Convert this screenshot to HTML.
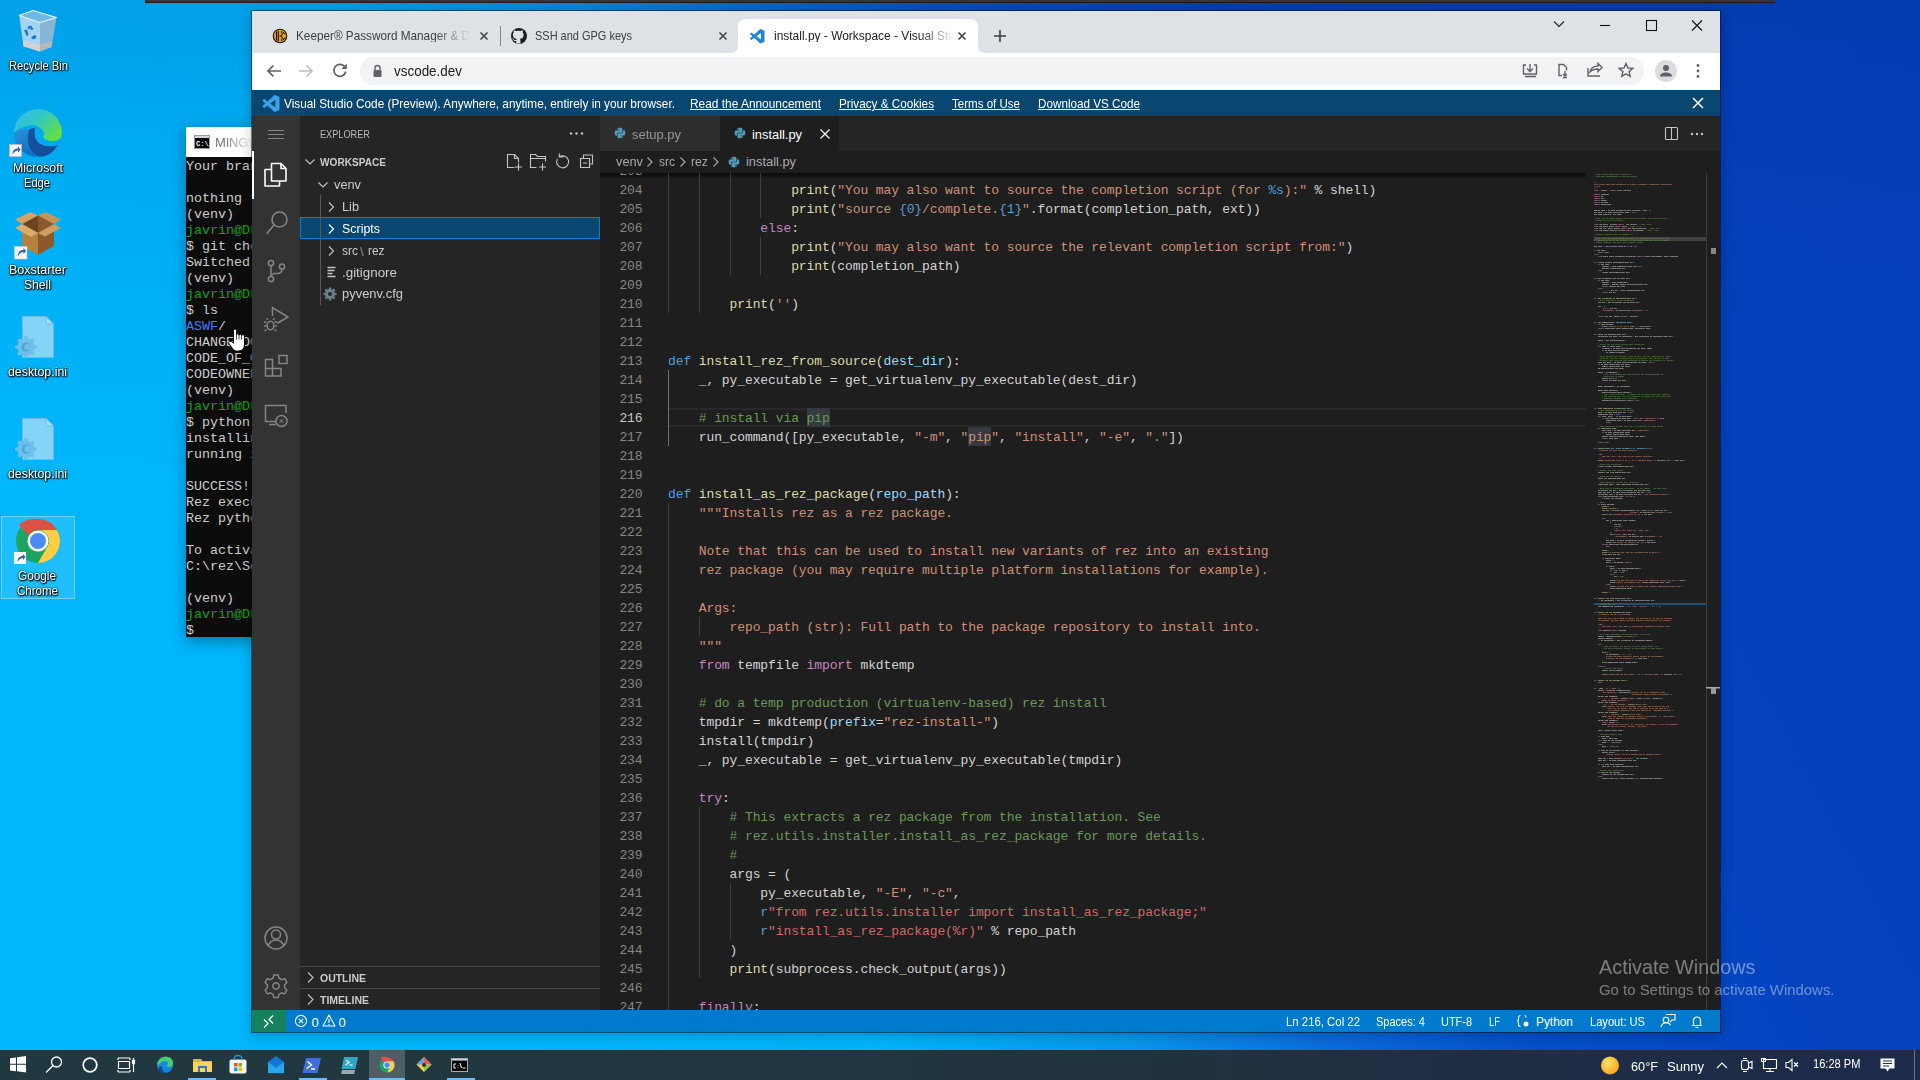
<!DOCTYPE html>
<html><head><meta charset="utf-8">
<style>
*{margin:0;padding:0;box-sizing:border-box}
html,body{width:1920px;height:1080px;overflow:hidden;position:relative;font-family:"Liberation Sans",sans-serif}
.a{position:absolute}
.t{position:absolute;white-space:pre}
svg{position:absolute;overflow:visible}
</style></head><body>
<div class="a" style="left:0;top:0;width:1920px;height:1080px;background:linear-gradient(180deg,rgba(0,30,110,.14) 0%,rgba(0,30,110,.05) 20%,rgba(0,0,0,0) 45%),linear-gradient(62deg,#00b7fd 0%,#00b5fb 36%,#0897ec 46%,#0a6cdc 54%,#0551cb 62%,#0442be 74%,#0340bb 100%)"></div>
<div class="a" style="left:145px;top:0;width:1630px;height:3px;background:#363636;border-bottom:1px solid #221a18"></div>
<!-- recycle bin -->
<svg style="left:0;top:0" width="80" height="60" viewBox="0 0 80 60">
  <path d="M19.2 15.5 L40 22.5 L40 51.5 L23.5 46 Z" fill="#a6d3ee"/>
  <path d="M40 22.5 L56.5 17.5 L51.5 47 L40 51.5 Z" fill="#86b6d4"/>
  <path d="M22.8 40.5 L40 44.5 L40 51.5 L23.5 46.5 Z" fill="#cfd3d6"/>
  <path d="M40 44.5 L52.5 41 L51.5 47 L40 51.5 Z" fill="#b3b8bc"/>
  <path d="M19.2 15.5 L33 10.5 L56.5 17.5 L40 22.5 Z" fill="#6cb9e2" stroke="#e8f6fd" stroke-width="1.1" stroke-linejoin="round"/>
  <g fill="#1877d6">
    <path d="M27.5 26.5 l3.5-1 2.5 3.5-1.8 1.2-1.6-2-1.6 1.5z"/>
    <path d="M24 30 l3 -.5 1.5 5.5 -1.8 1 z"/>
    <path d="M31 37.5 l3.5-2.5 2 1 -1 2.8 -3 .5z"/>
  </g>
</svg>
<!-- edge -->
<svg style="left:0;top:100px" width="80" height="65" viewBox="0 0 80 65">
  <defs>
    <linearGradient id="eg1" x1="0" y1="0" x2="1" y2=".6"><stop offset="0" stop-color="#3bb8ee"/><stop offset=".5" stop-color="#2fc7c8"/><stop offset="1" stop-color="#62dd4c"/></linearGradient>
    <linearGradient id="eg2" x1="0" y1="0" x2=".3" y2="1"><stop offset="0" stop-color="#2a93dc"/><stop offset="1" stop-color="#0f6cc4"/></linearGradient>
  </defs>
  <path d="M14 33 A24 24 0 0 0 38 57 Q24 48 29 30 Q21 27 14 33Z" fill="url(#eg2)"/>
  <path d="M14 33 A24 24 0 0 1 62 33 Q62 41 53 41 Q45 41 43 37 Q45 33 43 31 Q37 23 27 26 Q18 28 14 33 Z" fill="url(#eg1)"/>
  <path d="M29 30 Q24 48 38 56.5 Q50 58 58 45 Q48 48 40 44 Q33 39 35 28 Q31 28 29 30Z" fill="#154f9c"/>
  <rect x="9.5" y="44.5" width="12" height="12" fill="#f4f4f4" stroke="#c8b8a8" stroke-width=".6"/>
  <path d="M12.5 54.5c0-4 2-6 5.5-6v-2l2.5 3-2.5 3v-2c-2 0-4 1.5-5.5 4z" fill="#2a62b8"/>
</svg>
<!-- boxstarter -->
<svg style="left:0;top:200px" width="80" height="65" viewBox="0 0 80 65">
  <path d="M22 24 L38 15 L54 24 L38 33 Z" fill="#6e4420"/>
  <path d="M38 15 L54 24 L38 33 Z" fill="#8a5a2c"/>
  <path d="M22 24 L38 33 L38 55 L22 46 Z" fill="#b5813f"/>
  <path d="M38 33 L54 24 L54 46 L38 55 Z" fill="#8c5a2a"/>
  <path d="M15 19.5 L30 12 L38 15.5 L22 24 Z" fill="#d3a262"/>
  <path d="M38 15.5 L46 12 L61 19.5 L54 24 Z" fill="#c89558"/>
  <path d="M15 28 L22 24 L38 33 L31 37 Z" fill="#dbab6c"/>
  <path d="M38 33 L54 24 L61 28 L45 36.5 Z" fill="#cf9d60"/>
  <rect x="14.5" y="46.5" width="12.5" height="12.5" fill="#f4f4f4" stroke="#c8d0d8" stroke-width=".6"/>
  <path d="M18 56c0-4 2-6 5.5-6v-2l2.5 3-2.5 3v-2c-2 0-4 1.5-5.5 4z" fill="#2a62b8"/>
</svg>
<!-- desktop.ini 1 -->
<svg style="left:0;top:300px" width="80" height="70" viewBox="0 0 80 70">
  <path d="M22.5 16.5 H46 L53.5 24 V57.5 H22.5 Z" fill="#85d3f7" stroke="#6bbde6" stroke-width="1"/>
  <path d="M46 16.5 V24 H53.5 Z" fill="#a6e0fa" stroke="#6bbde6" stroke-width="1"/>
  <path d="M34.30 45.15 L36.89 45.47 L36.89 48.53 L34.30 48.85 L33.18 51.55 L34.79 53.62 L32.62 55.79 L30.55 54.18 L27.85 55.30 L27.53 57.89 L24.47 57.89 L24.15 55.30 L21.45 54.18 L19.38 55.79 L17.21 53.62 L18.82 51.55 L17.70 48.85 L15.11 48.53 L15.11 45.47 L17.70 45.15 L18.82 42.45 L17.21 40.38 L19.38 38.21 L21.45 39.82 L24.15 38.70 L24.47 36.11 L27.53 36.11 L27.85 38.70 L30.55 39.82 L32.62 38.21 L34.79 40.38 L33.18 42.45Z" fill="#6ec0ea"/>
  <circle cx="26" cy="47" r="4.5" fill="#4ea5d6"/>
  <circle cx="27.5" cy="47" r="3.2" fill="#6ec0ea"/>
</svg>
<svg style="left:0;top:402px" width="80" height="70" viewBox="0 0 80 70">
  <path d="M22.5 16.5 H46 L53.5 24 V57.5 H22.5 Z" fill="#85d3f7" stroke="#6bbde6" stroke-width="1"/>
  <path d="M46 16.5 V24 H53.5 Z" fill="#a6e0fa" stroke="#6bbde6" stroke-width="1"/>
  <path d="M34.30 45.15 L36.89 45.47 L36.89 48.53 L34.30 48.85 L33.18 51.55 L34.79 53.62 L32.62 55.79 L30.55 54.18 L27.85 55.30 L27.53 57.89 L24.47 57.89 L24.15 55.30 L21.45 54.18 L19.38 55.79 L17.21 53.62 L18.82 51.55 L17.70 48.85 L15.11 48.53 L15.11 45.47 L17.70 45.15 L18.82 42.45 L17.21 40.38 L19.38 38.21 L21.45 39.82 L24.15 38.70 L24.47 36.11 L27.53 36.11 L27.85 38.70 L30.55 39.82 L32.62 38.21 L34.79 40.38 L33.18 42.45Z" fill="#6ec0ea"/>
  <circle cx="26" cy="47" r="4.5" fill="#4ea5d6"/>
  <circle cx="27.5" cy="47" r="3.2" fill="#6ec0ea"/>
</svg>
<!-- chrome selected -->
<div class="a" style="left:1px;top:516px;width:74px;height:83px;background:rgba(255,255,255,.12);border:1px solid rgba(255,255,255,.35)"></div>
<svg style="left:0;top:515px" width="80" height="60" viewBox="0 0 80 60">
  <circle cx="38" cy="26" r="22" fill="#1da462"/>
  <path d="M38 4 A22 22 0 0 1 57 15 L38 15 A11 11 0 0 0 28.5 20.5 L19 10 A22 22 0 0 1 38 4Z" fill="#dd5144"/>
  <path d="M57 15 A22 22 0 0 1 38 48 L47.5 31.5 A11 11 0 0 0 38 15 Z" fill="#ffcd46"/>
  <circle cx="38" cy="26" r="10.5" fill="#fff"/>
  <circle cx="38" cy="26" r="8" fill="#4c8bf5"/>
  <rect x="14" y="37" width="12" height="12" fill="#fff"/>
  <path d="M17.5 47c0-4 2-6 5.5-6v-2l2.5 3-2.5 3v-2c-2 0-4 1.5-5.5 4z" fill="#2a62b8"/>
</svg>

<div class="a" style="left:178px;top:119px;width:90px;height:526px;background:rgba(0,0,0,.0);box-shadow:0 4px 14px rgba(0,0,0,.35);left:186px;top:127px;width:80px;height:510px"></div>
<div class="a" style="left:186px;top:127px;width:66px;height:510px;background:#0c0c0c;overflow:hidden">
<div class="a" style="left:0;top:0;width:66px;height:30px;background:#fff"></div>
<svg style="left:8px;top:8px" width="16" height="14" viewBox="0 0 16 14"><rect x="0.5" y="0.5" width="15" height="13" fill="#000" stroke="#9a9a9a"/><rect x="1" y="1" width="14" height="2" fill="#cfd6e0"/><text x="2" y="11" font-family="Liberation Mono" font-size="7" fill="#fff" font-weight="bold">C:\_</text></svg>
<div class="t" style="left:29px;top:8px;font-size:13px;line-height:15px;color:#777;letter-spacing:-0.2px;-webkit-mask-image:linear-gradient(90deg,#000 10px,transparent 40px)">MINGW64:/c/rez</div>
<div class="t" style="left:0;top:31.5px;font-family:'Liberation Mono',monospace;font-size:13.33px;line-height:16px;color:#cccccc">Your branch is up to date with &#x27;origin/master&#x27;.</div>
<div class="t" style="left:0;top:47.5px;font-family:'Liberation Mono',monospace;font-size:13.33px;line-height:16px;color:#ccc"></div>
<div class="t" style="left:0;top:63.5px;font-family:'Liberation Mono',monospace;font-size:13.33px;line-height:16px;color:#cccccc">nothing to commit, working tree clean</div>
<div class="t" style="left:0;top:79.5px;font-family:'Liberation Mono',monospace;font-size:13.33px;line-height:16px;color:#cccccc">(venv)</div>
<div class="t" style="left:0;top:95.5px;font-family:'Liberation Mono',monospace;font-size:13.33px;line-height:16px;color:#13a10e">javrin@DESKTOP MINGW64 /c/rez (master)</div>
<div class="t" style="left:0;top:111.5px;font-family:'Liberation Mono',monospace;font-size:13.33px;line-height:16px;color:#cccccc">$ git checkout dev</div>
<div class="t" style="left:0;top:127.5px;font-family:'Liberation Mono',monospace;font-size:13.33px;line-height:16px;color:#cccccc">Switched to branch &#x27;dev&#x27;</div>
<div class="t" style="left:0;top:143.5px;font-family:'Liberation Mono',monospace;font-size:13.33px;line-height:16px;color:#cccccc">(venv)</div>
<div class="t" style="left:0;top:159.5px;font-family:'Liberation Mono',monospace;font-size:13.33px;line-height:16px;color:#13a10e">javrin@DESKTOP MINGW64 /c/rez (dev)</div>
<div class="t" style="left:0;top:175.5px;font-family:'Liberation Mono',monospace;font-size:13.33px;line-height:16px;color:#cccccc">$ ls</div>
<div class="t" style="left:0;top:191.5px;font-family:'Liberation Mono',monospace;font-size:13.33px;line-height:16px;color:#cccccc"><span style="color:#3b78ff">ASWF</span>/</div>
<div class="t" style="left:0;top:207.5px;font-family:'Liberation Mono',monospace;font-size:13.33px;line-height:16px;color:#cccccc">CHANGELOG.md</div>
<div class="t" style="left:0;top:223.5px;font-family:'Liberation Mono',monospace;font-size:13.33px;line-height:16px;color:#cccccc">CODE_OF_CONDUCT.md</div>
<div class="t" style="left:0;top:239.5px;font-family:'Liberation Mono',monospace;font-size:13.33px;line-height:16px;color:#cccccc">CODEOWNERS</div>
<div class="t" style="left:0;top:255.5px;font-family:'Liberation Mono',monospace;font-size:13.33px;line-height:16px;color:#cccccc">(venv)</div>
<div class="t" style="left:0;top:271.5px;font-family:'Liberation Mono',monospace;font-size:13.33px;line-height:16px;color:#13a10e">javrin@DESKTOP MINGW64 /c/rez (dev)</div>
<div class="t" style="left:0;top:287.5px;font-family:'Liberation Mono',monospace;font-size:13.33px;line-height:16px;color:#cccccc">$ python install.py</div>
<div class="t" style="left:0;top:303.5px;font-family:'Liberation Mono',monospace;font-size:13.33px;line-height:16px;color:#cccccc">installing rez</div>
<div class="t" style="left:0;top:319.5px;font-family:'Liberation Mono',monospace;font-size:13.33px;line-height:16px;color:#cccccc">running install</div>
<div class="t" style="left:0;top:335.5px;font-family:'Liberation Mono',monospace;font-size:13.33px;line-height:16px;color:#ccc"></div>
<div class="t" style="left:0;top:351.5px;font-family:'Liberation Mono',monospace;font-size:13.33px;line-height:16px;color:#cccccc">SUCCESS!</div>
<div class="t" style="left:0;top:367.5px;font-family:'Liberation Mono',monospace;font-size:13.33px;line-height:16px;color:#cccccc">Rez executables installed to:</div>
<div class="t" style="left:0;top:383.5px;font-family:'Liberation Mono',monospace;font-size:13.33px;line-height:16px;color:#cccccc">Rez python API visible via:</div>
<div class="t" style="left:0;top:399.5px;font-family:'Liberation Mono',monospace;font-size:13.33px;line-height:16px;color:#ccc"></div>
<div class="t" style="left:0;top:415.5px;font-family:'Liberation Mono',monospace;font-size:13.33px;line-height:16px;color:#cccccc">To activate Rez, add the following path to PATH:</div>
<div class="t" style="left:0;top:431.5px;font-family:'Liberation Mono',monospace;font-size:13.33px;line-height:16px;color:#cccccc">C:\rez\Scripts\rez</div>
<div class="t" style="left:0;top:447.5px;font-family:'Liberation Mono',monospace;font-size:13.33px;line-height:16px;color:#ccc"></div>
<div class="t" style="left:0;top:463.5px;font-family:'Liberation Mono',monospace;font-size:13.33px;line-height:16px;color:#cccccc">(venv)</div>
<div class="t" style="left:0;top:479.5px;font-family:'Liberation Mono',monospace;font-size:13.33px;line-height:16px;color:#13a10e">javrin@DESKTOP MINGW64 /c/rez (dev)</div>
<div class="t" style="left:0;top:495.5px;font-family:'Liberation Mono',monospace;font-size:13.33px;line-height:16px;color:#cccccc">$</div>
</div>
<svg style="left:220px;top:320px" width="30" height="36" viewBox="0 0 30 36">
<path d="M13.5 21 V10.5 A1.5 1.5 0 0 1 16.5 10.5 V15 A1.25 1.25 0 0 1 19 15 V15.5 A1.25 1.25 0 0 1 21.5 15.5 V16 A1.5 1.5 0 0 1 24.5 16 V24 Q24.5 31 18.5 31 H16.5 Q14 31 12.5 28.5 L9 23.5 Q8 22 9.5 21.3 Q11 20.8 12.5 22.3 L13.5 23.3 Z" fill="#fff" stroke="#000" stroke-width="0.9"/>
<path d="M16.5 15v4.5 M19 15.5v4 M21.5 16v3.5" stroke="#000" stroke-width=".7"/>
</svg>
<!-- browser window frame -->
<div class="a" style="left:251px;top:10px;width:1470px;height:1023px;background:#dee1e6;border:1px solid rgba(0,10,20,.5);background-clip:padding-box;box-shadow:0 3px 12px rgba(0,0,0,.22)"></div>
<!-- tab strip content -->
<svg class="a" style="left:252px;top:11px" width="1468" height="42" viewBox="0 0 1468 42">
  <!-- keeper icon -->
  <circle cx="28" cy="25" r="7.3" fill="#111"/>
  <circle cx="28" cy="25" r="6.2" fill="#e5a50a"/>
  <path d="M24.5 20.5v9 M26.3 19.8v10.4" stroke="#111" stroke-width="1.1"/>
  <path d="M27.5 25h1.5 M29 25l3-4 M29 25l3 4 M29.5 20l.5 2.5 M31.8 22.5l1.8 .5 M31.8 27.5l1.8-.5 M29.5 30l.5-2.5" stroke="#111" stroke-width="1"/>
  <!-- close x tab1 -->
  <path d="M228.5 21.5l7 7 M235.5 21.5l-7 7" stroke="#3c4043" stroke-width="1.5"/>
  <!-- separator -->
  <rect x="248" y="15" width="1" height="20" fill="#80868b"/>
  <!-- github icon -->
  <circle cx="267" cy="25" r="8" fill="#1b1f23"/>
  <path d="M264.2 32.6v-2.6c-2.3.5-2.8-1-2.8-1-.4-.9-.9-1.2-.9-1.2-.8-.5 0-.5 0-.5.8.1 1.3.9 1.3.9.7 1.3 2 .9 2.4.7.1-.5.3-.9.5-1.1-1.9-.2-3.8-.9-3.8-4.1 0-.9.3-1.7.9-2.3-.1-.2-.4-1.1.1-2.2 0 0 .7-.2 2.3.9a7.8 7.8 0 0 1 4.1 0c1.6-1.1 2.3-.9 2.3-.9.5 1.1.2 2 .1 2.2.5.6.9 1.3.9 2.3 0 3.2-1.9 3.9-3.8 4.1.3.3.6.8.6 1.5v3.3" fill="#dee1e6"/>
  <path d="M467.5 21.5l7 7 M474.5 21.5l-7 7" stroke="#3c4043" stroke-width="1.5"/>
  <!-- active tab -->
  <path d="M478 42 q8 0 8 -8 v-18 q0 -8 8 -8 h224 q8 0 8 8 v18 q0 8 8 8 z" fill="#fff"/>
  <!-- vscode logo -->
  <g transform="translate(498,18) scale(0.145)">
    <path d="M96.46 10.8 75.86.87a6.23 6.23 0 0 0-7.1 1.2L29.35 38.04 12.19 25.01a4.16 4.16 0 0 0-5.32.24L1.37 30.25a4.16 4.16 0 0 0 0 6.16L16.26 50 1.37 63.59a4.16 4.16 0 0 0 0 6.16l5.5 5a4.16 4.16 0 0 0 5.32.24l17.16-13.03 39.41 35.96a6.23 6.23 0 0 0 7.1 1.2l20.6-9.92A6.25 6.25 0 0 0 100 83.58V16.42a6.25 6.25 0 0 0-3.54-5.62ZM75.02 72.7 45.11 50l29.91-22.7Z" fill="#1f86d6"/>
  </g>
  <path d="M706.5 21.5l7 7 M713.5 21.5l-7 7" stroke="#3c4043" stroke-width="1.5"/>
  <!-- plus -->
  <path d="M748 19v12 M742 25h12" stroke="#3c4043" stroke-width="1.6"/>
  <!-- caption buttons -->
  <path d="M1302 10.5l5 5 5-5" stroke="#222" stroke-width="1.1" fill="none"/>
  <path d="M1348 14.5h10" stroke="#111" stroke-width="1.1"/>
  <rect x="1394.5" y="9.5" width="10" height="10" stroke="#111" stroke-width="1.1" fill="none"/>
  <path d="M1440 9.5l10 10 M1450 9.5l-10 10" stroke="#111" stroke-width="1.1"/>
</svg>
<!-- toolbar -->
<div class="a" style="left:252px;top:53px;width:1468px;height:37px;background:#fff"></div>
<div class="a" style="left:360px;top:57px;width:1284px;height:28px;border-radius:14px;background:#f1f3f4"></div>
<svg class="a" style="left:252px;top:53px" width="1468" height="37" viewBox="0 0 1468 37">
  <path d="M29 18h-13 M21.5 12.5 16 18l5.5 5.5" stroke="#5f6368" stroke-width="1.7" fill="none"/>
  <path d="M47 18h13 M54.5 12.5 60 18l-5.5 5.5" stroke="#bdc1c6" stroke-width="1.7" fill="none"/>
  <path d="M92.5 13.5a6 6 0 1 0 1.3 5" stroke="#5f6368" stroke-width="1.7" fill="none"/>
  <path d="M94.8 10.5v5.5h-5.5z" fill="#5f6368"/>
  <!-- lock -->
  <rect x="121.5" y="17" width="8" height="7" rx="1" fill="#5f6368"/>
  <path d="M123 17v-2a2.5 2.5 0 0 1 5 0v2" stroke="#5f6368" stroke-width="1.4" fill="none"/>
  <!-- right icons -->
  <g stroke="#5f6368" stroke-width="1.4" fill="none">
    <path d="M1274 12h-2.5v9h13v-9h-2.5 M1278 11v7 M1275 15.5l3 3 3-3"/>
    <path d="M1273 23.5h11" stroke-width="1.6"/>
    <path d="M1307 20v-8.5h4.5l3 3v3"/>
    <path d="M1307 20v2.5h3 M1313 18v5 M1311 21l2 2 2-2 M1311 24.5h4"/>
    <path d="M1336 15v8h12 M1338 19c1-4 4-6 8-6v-2.5l4 4-4 4v-2.5c-3 0-6 1-8 3z"/>
    <path d="M1374 10.5l2 4.5 4.8.4-3.7 3.2 1.1 4.7-4.2-2.5-4.2 2.5 1.1-4.7-3.7-3.2 4.8-.4z"/>
  </g>
  <circle cx="1414" cy="18" r="11" fill="#dadce0"/>
  <circle cx="1414" cy="15" r="3" fill="#5f6368"/>
  <path d="M1408 23.5c0-3 3-4 6-4s6 1 6 4z" fill="#5f6368"/>
  <circle cx="1446" cy="12.5" r="1.4" fill="#5f6368"/>
  <circle cx="1446" cy="18" r="1.4" fill="#5f6368"/>
  <circle cx="1446" cy="23.5" r="1.4" fill="#5f6368"/>
</svg>
<!-- banner -->
<div class="a" style="left:252px;top:90px;width:1468px;height:26px;background:#094771"></div>
<svg class="a" style="left:262px;top:95px" width="18" height="17" viewBox="0 0 100 100">
  <path d="M96.46 10.8 75.86.87a6.23 6.23 0 0 0-7.1 1.2L29.35 38.04 12.19 25.01a4.16 4.16 0 0 0-5.32.24L1.37 30.25a4.16 4.16 0 0 0 0 6.16L16.26 50 1.37 63.59a4.16 4.16 0 0 0 0 6.16l5.5 5a4.16 4.16 0 0 0 5.32.24l17.16-13.03 39.41 35.96a6.23 6.23 0 0 0 7.1 1.2l20.6-9.92A6.25 6.25 0 0 0 100 83.58V16.42a6.25 6.25 0 0 0-3.54-5.62ZM75.02 72.7 45.11 50l29.91-22.7Z" fill="#3aa0e8"/>
</svg>
<svg class="a" style="left:1691px;top:96px" width="14" height="14"><path d="M2 2l10 10 M12 2 2 12" stroke="#fff" stroke-width="1.5"/></svg>

<!-- activity bar -->
<div class="a" style="left:252px;top:116px;width:48px;height:894px;background:#333333"></div>
<div class="a" style="left:252px;top:151px;width:2px;height:48px;background:#fff"></div>
<svg style="left:252px;top:116px" width="48" height="894" viewBox="0 0 48 894">
  <g stroke="#858585" stroke-width="1" fill="none">
    <path d="M16 14.5h16 M16 18.5h16 M16 22.5h16"/>
  </g>
  <!-- explorer (active) -->
  <g stroke="#ffffff" stroke-width="1.6" fill="none" stroke-linejoin="round">
    <path d="M19.5 53.5h-6.5v16.5h14.5v-6"/>
    <path d="M19.5 47.5h9.5l5 5v12.5h-14.5z" fill="#333"/>
    <path d="M29 47.5v5h5"/>
  </g>
  <!-- search -->
  <g stroke="#858585" stroke-width="1.6" fill="none">
    <circle cx="27.5" cy="103.5" r="7.5"/>
    <path d="M22.2 108.8 14.5 118"/>
  </g>
  <!-- source control -->
  <g stroke="#858585" stroke-width="1.5" fill="none">
    <circle cx="19" cy="147" r="2.6"/>
    <circle cx="30" cy="150.5" r="2.6"/>
    <circle cx="19" cy="163" r="2.6"/>
    <path d="M19 149.6v10.8 M30 153.1c0 3-2 4.5-5 4.5h-2c-2 0-4 1.5-4 2.8"/>
  </g>
  <!-- run & debug -->
  <g stroke="#858585" stroke-width="1.5" fill="none">
    <path d="M20.5 200v-8.5l15.5 9.5-11 6.5"/>
    <ellipse cx="18.5" cy="209.5" rx="3.4" ry="4.2" fill="#333"/>
    <path d="M14.5 206h-2.5 M14.5 210h-2.5 M14.5 213.5l-2 1.5 M22.5 206h2.5 M22.5 210h2.5 M22.5 213.5l2 1.5 M16 203.8l-1.5-1.5 M21 203.8l1.5-1.5"/>
  </g>
  <!-- extensions -->
  <g stroke="#858585" stroke-width="1.5" fill="none">
    <path d="M13.5 243.5h7v16.5h-7z M20.5 252.5h8.5v7.5h-8.5 M13.5 252.5h7"/>
    <rect x="27" y="239.5" width="8" height="8"/>
  </g>
  <!-- remote explorer -->
  <g stroke="#858585" stroke-width="1.5" fill="none">
    <path d="M26 305.5H13.5v-16h20.5v7.5 M17 308.5h7"/>
    <circle cx="29.5" cy="305" r="5.5" fill="#333"/>
    <path d="M27.5 303l2 2-2 2 M31.5 303l-2 2 2 2" stroke-width="1"/>
  </g>
  <!-- account -->
  <g stroke="#858585" stroke-width="1.5" fill="none">
    <circle cx="24" cy="822" r="11"/>
    <circle cx="24" cy="818.5" r="4.5"/>
    <path d="M16 830c2-4.5 5-6 8-6s6 1.5 8 6"/>
  </g>
  <!-- gear -->
  <g transform="translate(24,870)" stroke="#858585" stroke-width="1.5" fill="none">
    <path d="M-2.2-11h4.4l.8 3.2 2.6 1.5 3.1-1 2.2 3.8-2.3 2.3v3l2.3 2.3-2.2 3.8-3.1-1-2.6 1.5-.8 3.2h-4.4l-.8-3.2-2.6-1.5-3.1 1-2.2-3.8 2.3-2.3v-3l-2.3-2.3 2.2-3.8 3.1 1 2.6-1.5z"/>
    <circle cx="0" cy="0" r="3.2"/>
  </g>
</svg>
<!-- sidebar -->
<div class="a" style="left:300px;top:116px;width:300px;height:894px;background:#252526"></div>
<div class="a" style="left:300px;top:217px;width:300px;height:22px;background:#094771;border:1px solid #007fd4"></div>
<div class="a" style="left:320px;top:195px;width:1px;height:110px;background:#585858"></div>
<div class="a" style="left:300px;top:966px;width:300px;height:1px;background:#444444"></div>
<div class="a" style="left:300px;top:988px;width:300px;height:1px;background:#444444"></div>
<svg style="left:300px;top:116px" width="300" height="894" viewBox="0 0 300 894">
  <g fill="#c5c5c5"><circle cx="271" cy="17.5" r="1.2"/><circle cx="276.5" cy="17.5" r="1.2"/><circle cx="282" cy="17.5" r="1.2"/></g>
  <g stroke="#c5c5c5" stroke-width="1.1" fill="none">
    <path d="M5.5 43.5l4.5 4.5 4.5-4.5"/>
    <path d="M18.5 66.5l4.5 4.5 4.5-4.5"/>
    <path d="M29 86.5l4.5 4.5-4.5 4.5"/>
    <path d="M29 108.5l4.5 4.5-4.5 4.5" stroke="#fff"/>
    <path d="M29 130.5l4.5 4.5-4.5 4.5"/>
    <!-- gitignore lines icon -->
    <path d="M27.5 151.5h8 M27.5 154.5h7 M27.5 157.5h5 M27.5 160.5h8" stroke-width="1.3"/>
    <path d="M8 856.5l5 5-5 5" />
    <path d="M8 878.5l5 5-5 5" />
  </g>
  <!-- header action icons -->
  <g stroke="#c5c5c5" stroke-width="1.1" fill="none">
    <path d="M214.5 51.5h-7v-13h7l4 4v4 M214.5 38.5v4h4 M218.5 47.5v7 M215 51h7"/>
    <path d="M236.5 51.5h-6v-13h5l2 2h8v5 M230.5 42.5h15 M242.5 47.5v7 M239 51h7"/>
    <path d="M259.3 40.9A6 6 0 1 1 257.4 43 M259.3 37.5v3.5h3.5"/>
    <path d="M283.5 42v-3h9v9h-3 M280.5 42.5h9v9h-9z M283 47h4"/>
  </g>
  <!-- pyvenv gear -->
  <g transform="translate(30,178)" fill="#6d8086">
    <circle r="5"/>
    <g stroke="#6d8086" stroke-width="2.2"><path d="M0-6.5v13 M-6.5 0h13 M-4.6-4.6l9.2 9.2 M4.6-4.6l-9.2 9.2"/></g>
    <circle r="2" fill="#252526"/>
  </g>
</svg>
<!-- editor -->
<div class="a" style="left:600px;top:116px;width:1120px;height:35px;background:#252526"></div>
<div class="a" style="left:600px;top:116px;width:120px;height:35px;background:#2d2d2d"></div>
<div class="a" style="left:720px;top:116px;width:119px;height:35px;background:#1e1e1e"></div>
<div class="a" style="left:600px;top:151px;width:1120px;height:859px;background:#1e1e1e"></div>
<div class="a" style="left:600px;top:173px;width:986px;height:6px;background:linear-gradient(#0a0a0a,rgba(0,0,0,0))"></div>
<div class="a" style="left:1706px;top:173px;width:1px;height:837px;background:#3a3a3a"></div>
<svg style="left:600px;top:116px" width="1120" height="894" viewBox="0 0 1120 894">
  <!-- close x active tab -->
  <path d="M220.5 13.5l9 9 M229.5 13.5l-9 9" stroke="#fff" stroke-width="1.2"/>
  <!-- split editor -->
  <rect x="1065.5" y="11.5" width="12" height="12" rx="1" stroke="#c5c5c5" stroke-width="1.1" fill="none"/>
  <path d="M1071.5 11.5v12" stroke="#c5c5c5" stroke-width="1.1"/>
  <g fill="#c5c5c5"><circle cx="1092" cy="18" r="1.2"/><circle cx="1097" cy="18" r="1.2"/><circle cx="1102" cy="18" r="1.2"/></g>
  <!-- breadcrumb chevrons -->
  <g stroke="#a9a9a9" stroke-width="1.2" fill="none">
    <path d="M47.5 41.5l4.5 4.5-4.5 4.5 M80.5 41.5l4.5 4.5-4.5 4.5 M113.5 41.5l4.5 4.5-4.5 4.5"/>
  </g>
  <!-- scrollbar markers -->
  <rect x="1111" y="132" width="5" height="6" fill="#888"/>
  <rect x="1106" y="571" width="14" height="1.5" fill="#aaa"/>
  <rect x="1111" y="572" width="5" height="6" fill="#999"/>
</svg>
<!-- python icons -->
<svg style="left:614px;top:127px" width="12" height="12" viewBox="0 0 16 16"><path d="M7.9 1C4.3 1 4.5 2.6 4.5 2.6v1.6h3.5v.5H3.1S.8 4.4.8 8s2 3.5 2 3.5h1.2V9.8s-.1-2 2-2h3.4s1.9 0 1.9-1.9V2.9S11.6 1 7.9 1zM6 2.1a.6.6 0 1 1 0 1.2.6.6 0 0 1 0-1.2z" fill="#519aba"/><path d="M8.1 15c3.6 0 3.4-1.6 3.4-1.6v-1.6H8v-.5h4.9s2.3.3 2.3-3.3-2-3.5-2-3.5H12v1.7s.1 2-2 2H6.6s-1.9 0-1.9 1.9v3.1S4.4 15 8.1 15zm1.9-1.1a.6.6 0 1 1 0-1.2.6.6 0 0 1 0 1.2z" fill="#519aba"/></svg>
<svg style="left:734px;top:127px" width="12" height="12" viewBox="0 0 16 16"><path d="M7.9 1C4.3 1 4.5 2.6 4.5 2.6v1.6h3.5v.5H3.1S.8 4.4.8 8s2 3.5 2 3.5h1.2V9.8s-.1-2 2-2h3.4s1.9 0 1.9-1.9V2.9S11.6 1 7.9 1zM6 2.1a.6.6 0 1 1 0 1.2.6.6 0 0 1 0-1.2z" fill="#519aba"/><path d="M8.1 15c3.6 0 3.4-1.6 3.4-1.6v-1.6H8v-.5h4.9s2.3.3 2.3-3.3-2-3.5-2-3.5H12v1.7s.1 2-2 2H6.6s-1.9 0-1.9 1.9v3.1S4.4 15 8.1 15zm1.9-1.1a.6.6 0 1 1 0-1.2.6.6 0 0 1 0 1.2z" fill="#519aba"/></svg>
<svg style="left:728px;top:156px" width="12" height="12" viewBox="0 0 16 16"><path d="M7.9 1C4.3 1 4.5 2.6 4.5 2.6v1.6h3.5v.5H3.1S.8 4.4.8 8s2 3.5 2 3.5h1.2V9.8s-.1-2 2-2h3.4s1.9 0 1.9-1.9V2.9S11.6 1 7.9 1zM6 2.1a.6.6 0 1 1 0 1.2.6.6 0 0 1 0-1.2z" fill="#519aba"/><path d="M8.1 15c3.6 0 3.4-1.6 3.4-1.6v-1.6H8v-.5h4.9s2.3.3 2.3-3.3-2-3.5-2-3.5H12v1.7s.1 2-2 2H6.6s-1.9 0-1.9 1.9v3.1S4.4 15 8.1 15zm1.9-1.1a.6.6 0 1 1 0-1.2.6.6 0 0 1 0 1.2z" fill="#519aba"/></svg>
<!-- status bar -->
<div class="a" style="left:252px;top:1010px;width:1468px;height:22px;background:#007acc"></div>
<div class="a" style="left:252px;top:1010px;width:34px;height:22px;background:#16825d"></div>
<svg style="left:252px;top:1010px" width="1468" height="22" viewBox="0 0 1468 22">
  <path d="M12 9.5l4 4-4 4 M21 5.5l-4 4 4 4" stroke="#fff" stroke-width="1.2" fill="none"/>
  <circle cx="49" cy="11" r="5.6" stroke="#fff" stroke-width="1.1" fill="none"/>
  <path d="M46.8 8.8l4.4 4.4 M51.2 8.8l-4.4 4.4" stroke="#fff" stroke-width="1.1"/>
  <path d="M77 5l6 11h-12z M77 9v4 M77 14v1" stroke="#fff" stroke-width="1.1" fill="none" stroke-linejoin="round"/>
  <!-- {} python -->
  <path d="M1268.5 5.5c-1.5 0-2 .7-2 2v2c0 1-.5 1.5-1.5 1.5 1 0 1.5.5 1.5 1.5v2c0 1.3.5 2 2 2 M1272.5 5.5c1 0 1.5.7 1.5 2" stroke="#fff" stroke-width="1.1" fill="none"/>
  <circle cx="1274" cy="14" r="2.5" fill="#fff"/>
  <!-- feedback -->
  <g stroke="#fff" stroke-width="1.1" fill="none">
    <circle cx="1414" cy="10" r="2.8"/>
    <path d="M1409 17c.8-3 2.5-4.2 5-4.2s4 1.2 4.5 2.5 M1414 4.5h9v5.5h-3l-2 2"/>
  </g>
  <!-- bell -->
  <path d="M1440 15.5h10 M1441.5 15.5v-5a3.5 3.5 0 0 1 7 0v5 M1443.5 17.5h3" stroke="#fff" stroke-width="1.2" fill="none"/>
</svg>

<div class="a" style="left:600px;top:173px;width:1106px;height:837px;overflow:hidden">
<div class="a" style="left:68px;top:235px;width:918px;height:19px;border-top:1px solid #282828;border-bottom:1px solid #282828;box-shadow:inset 0 1px 0 #282828,inset 0 -1px 0 #282828"></div>
<div class="a" style="left:206.55px;top:235px;width:23.09px;height:19px;background:#343a40"></div>
<div class="a" style="left:368.18px;top:254px;width:23.09px;height:19px;background:#343a40"></div>
<div class="a" style="left:68.00px;top:-12px;width:1px;height:152px;background:#404040"></div>
<div class="a" style="left:98.79px;top:-12px;width:1px;height:152px;background:#404040"></div>
<div class="a" style="left:129.58px;top:-12px;width:1px;height:114px;background:#404040"></div>
<div class="a" style="left:160.36px;top:-12px;width:1px;height:57px;background:#404040"></div>
<div class="a" style="left:160.36px;top:64px;width:1px;height:38px;background:#404040"></div>
<div class="a" style="left:68.00px;top:197px;width:1px;height:76px;background:#707070"></div>
<div class="a" style="left:68.00px;top:330px;width:1px;height:513px;background:#404040"></div>
<div class="a" style="left:98.79px;top:444px;width:1px;height:19px;background:#404040"></div>
<div class="a" style="left:98.79px;top:634px;width:1px;height:171px;background:#404040"></div>
<div class="a" style="left:129.58px;top:710px;width:1px;height:57px;background:#404040"></div>
<div class="t" style="left:19.41px;top:-8.16px;font-family:'Liberation Mono',monospace;font-size:13px;line-height:13px;letter-spacing:-0.104px;color:#858585">203</div>
<div class="t" style="left:19.41px;top:10.84px;font-family:'Liberation Mono',monospace;font-size:13px;line-height:13px;letter-spacing:-0.104px;color:#858585">204</div>
<div class="t" style="left:19.41px;top:29.84px;font-family:'Liberation Mono',monospace;font-size:13px;line-height:13px;letter-spacing:-0.104px;color:#858585">205</div>
<div class="t" style="left:19.41px;top:48.84px;font-family:'Liberation Mono',monospace;font-size:13px;line-height:13px;letter-spacing:-0.104px;color:#858585">206</div>
<div class="t" style="left:19.41px;top:67.84px;font-family:'Liberation Mono',monospace;font-size:13px;line-height:13px;letter-spacing:-0.104px;color:#858585">207</div>
<div class="t" style="left:19.41px;top:86.84px;font-family:'Liberation Mono',monospace;font-size:13px;line-height:13px;letter-spacing:-0.104px;color:#858585">208</div>
<div class="t" style="left:19.41px;top:105.84px;font-family:'Liberation Mono',monospace;font-size:13px;line-height:13px;letter-spacing:-0.104px;color:#858585">209</div>
<div class="t" style="left:19.41px;top:124.84px;font-family:'Liberation Mono',monospace;font-size:13px;line-height:13px;letter-spacing:-0.104px;color:#858585">210</div>
<div class="t" style="left:19.41px;top:143.84px;font-family:'Liberation Mono',monospace;font-size:13px;line-height:13px;letter-spacing:-0.104px;color:#858585">211</div>
<div class="t" style="left:19.41px;top:162.84px;font-family:'Liberation Mono',monospace;font-size:13px;line-height:13px;letter-spacing:-0.104px;color:#858585">212</div>
<div class="t" style="left:19.41px;top:181.84px;font-family:'Liberation Mono',monospace;font-size:13px;line-height:13px;letter-spacing:-0.104px;color:#858585">213</div>
<div class="t" style="left:19.41px;top:200.84px;font-family:'Liberation Mono',monospace;font-size:13px;line-height:13px;letter-spacing:-0.104px;color:#858585">214</div>
<div class="t" style="left:19.41px;top:219.84px;font-family:'Liberation Mono',monospace;font-size:13px;line-height:13px;letter-spacing:-0.104px;color:#858585">215</div>
<div class="t" style="left:19.41px;top:238.84px;font-family:'Liberation Mono',monospace;font-size:13px;line-height:13px;letter-spacing:-0.104px;color:#c6c6c6">216</div>
<div class="t" style="left:19.41px;top:257.84px;font-family:'Liberation Mono',monospace;font-size:13px;line-height:13px;letter-spacing:-0.104px;color:#858585">217</div>
<div class="t" style="left:19.41px;top:276.84px;font-family:'Liberation Mono',monospace;font-size:13px;line-height:13px;letter-spacing:-0.104px;color:#858585">218</div>
<div class="t" style="left:19.41px;top:295.84px;font-family:'Liberation Mono',monospace;font-size:13px;line-height:13px;letter-spacing:-0.104px;color:#858585">219</div>
<div class="t" style="left:19.41px;top:314.84px;font-family:'Liberation Mono',monospace;font-size:13px;line-height:13px;letter-spacing:-0.104px;color:#858585">220</div>
<div class="t" style="left:19.41px;top:333.84px;font-family:'Liberation Mono',monospace;font-size:13px;line-height:13px;letter-spacing:-0.104px;color:#858585">221</div>
<div class="t" style="left:19.41px;top:352.84px;font-family:'Liberation Mono',monospace;font-size:13px;line-height:13px;letter-spacing:-0.104px;color:#858585">222</div>
<div class="t" style="left:19.41px;top:371.84px;font-family:'Liberation Mono',monospace;font-size:13px;line-height:13px;letter-spacing:-0.104px;color:#858585">223</div>
<div class="t" style="left:19.41px;top:390.84px;font-family:'Liberation Mono',monospace;font-size:13px;line-height:13px;letter-spacing:-0.104px;color:#858585">224</div>
<div class="t" style="left:19.41px;top:409.84px;font-family:'Liberation Mono',monospace;font-size:13px;line-height:13px;letter-spacing:-0.104px;color:#858585">225</div>
<div class="t" style="left:19.41px;top:428.84px;font-family:'Liberation Mono',monospace;font-size:13px;line-height:13px;letter-spacing:-0.104px;color:#858585">226</div>
<div class="t" style="left:19.41px;top:447.84px;font-family:'Liberation Mono',monospace;font-size:13px;line-height:13px;letter-spacing:-0.104px;color:#858585">227</div>
<div class="t" style="left:19.41px;top:466.84px;font-family:'Liberation Mono',monospace;font-size:13px;line-height:13px;letter-spacing:-0.104px;color:#858585">228</div>
<div class="t" style="left:19.41px;top:485.84px;font-family:'Liberation Mono',monospace;font-size:13px;line-height:13px;letter-spacing:-0.104px;color:#858585">229</div>
<div class="t" style="left:19.41px;top:504.84px;font-family:'Liberation Mono',monospace;font-size:13px;line-height:13px;letter-spacing:-0.104px;color:#858585">230</div>
<div class="t" style="left:19.41px;top:523.84px;font-family:'Liberation Mono',monospace;font-size:13px;line-height:13px;letter-spacing:-0.104px;color:#858585">231</div>
<div class="t" style="left:19.41px;top:542.84px;font-family:'Liberation Mono',monospace;font-size:13px;line-height:13px;letter-spacing:-0.104px;color:#858585">232</div>
<div class="t" style="left:19.41px;top:561.84px;font-family:'Liberation Mono',monospace;font-size:13px;line-height:13px;letter-spacing:-0.104px;color:#858585">233</div>
<div class="t" style="left:19.41px;top:580.84px;font-family:'Liberation Mono',monospace;font-size:13px;line-height:13px;letter-spacing:-0.104px;color:#858585">234</div>
<div class="t" style="left:19.41px;top:599.84px;font-family:'Liberation Mono',monospace;font-size:13px;line-height:13px;letter-spacing:-0.104px;color:#858585">235</div>
<div class="t" style="left:19.41px;top:618.84px;font-family:'Liberation Mono',monospace;font-size:13px;line-height:13px;letter-spacing:-0.104px;color:#858585">236</div>
<div class="t" style="left:19.41px;top:637.84px;font-family:'Liberation Mono',monospace;font-size:13px;line-height:13px;letter-spacing:-0.104px;color:#858585">237</div>
<div class="t" style="left:19.41px;top:656.84px;font-family:'Liberation Mono',monospace;font-size:13px;line-height:13px;letter-spacing:-0.104px;color:#858585">238</div>
<div class="t" style="left:19.41px;top:675.84px;font-family:'Liberation Mono',monospace;font-size:13px;line-height:13px;letter-spacing:-0.104px;color:#858585">239</div>
<div class="t" style="left:19.41px;top:694.84px;font-family:'Liberation Mono',monospace;font-size:13px;line-height:13px;letter-spacing:-0.104px;color:#858585">240</div>
<div class="t" style="left:19.41px;top:713.84px;font-family:'Liberation Mono',monospace;font-size:13px;line-height:13px;letter-spacing:-0.104px;color:#858585">241</div>
<div class="t" style="left:19.41px;top:732.84px;font-family:'Liberation Mono',monospace;font-size:13px;line-height:13px;letter-spacing:-0.104px;color:#858585">242</div>
<div class="t" style="left:19.41px;top:751.84px;font-family:'Liberation Mono',monospace;font-size:13px;line-height:13px;letter-spacing:-0.104px;color:#858585">243</div>
<div class="t" style="left:19.41px;top:770.84px;font-family:'Liberation Mono',monospace;font-size:13px;line-height:13px;letter-spacing:-0.104px;color:#858585">244</div>
<div class="t" style="left:19.41px;top:789.84px;font-family:'Liberation Mono',monospace;font-size:13px;line-height:13px;letter-spacing:-0.104px;color:#858585">245</div>
<div class="t" style="left:19.41px;top:808.84px;font-family:'Liberation Mono',monospace;font-size:13px;line-height:13px;letter-spacing:-0.104px;color:#858585">246</div>
<div class="t" style="left:19.41px;top:827.84px;font-family:'Liberation Mono',monospace;font-size:13px;line-height:13px;letter-spacing:-0.104px;color:#858585">247</div>
<div class="t" style="left:19.41px;top:846.84px;font-family:'Liberation Mono',monospace;font-size:13px;line-height:13px;letter-spacing:-0.104px;color:#858585">248</div>
<div class="t" style="left:191.15px;top:10.84px;font-family:'Liberation Mono',monospace;font-size:13px;line-height:13px;letter-spacing:-0.104px"><span style="color:#dcdcaa">print</span><span style="color:#d4d4d4">(</span><span style="color:#ce9178">&quot;You may also want to source the completion script (for </span><span style="color:#569cd6">%s</span><span style="color:#ce9178">):&quot;</span><span style="color:#d4d4d4"> % shell)</span></div>
<div class="t" style="left:191.15px;top:29.84px;font-family:'Liberation Mono',monospace;font-size:13px;line-height:13px;letter-spacing:-0.104px"><span style="color:#dcdcaa">print</span><span style="color:#d4d4d4">(</span><span style="color:#ce9178">&quot;source </span><span style="color:#569cd6">{0}</span><span style="color:#ce9178">/complete.</span><span style="color:#569cd6">{1}</span><span style="color:#ce9178">&quot;</span><span style="color:#d4d4d4">.format(completion_path, ext))</span></div>
<div class="t" style="left:160.36px;top:48.84px;font-family:'Liberation Mono',monospace;font-size:13px;line-height:13px;letter-spacing:-0.104px"><span style="color:#c586c0">else</span><span style="color:#d4d4d4">:</span></div>
<div class="t" style="left:191.15px;top:67.84px;font-family:'Liberation Mono',monospace;font-size:13px;line-height:13px;letter-spacing:-0.104px"><span style="color:#dcdcaa">print</span><span style="color:#d4d4d4">(</span><span style="color:#ce9178">&quot;You may also want to source the relevant completion script from:&quot;</span><span style="color:#d4d4d4">)</span></div>
<div class="t" style="left:191.15px;top:86.84px;font-family:'Liberation Mono',monospace;font-size:13px;line-height:13px;letter-spacing:-0.104px"><span style="color:#dcdcaa">print</span><span style="color:#d4d4d4">(completion_path)</span></div>
<div class="t" style="left:129.58px;top:124.84px;font-family:'Liberation Mono',monospace;font-size:13px;line-height:13px;letter-spacing:-0.104px"><span style="color:#dcdcaa">print</span><span style="color:#d4d4d4">(</span><span style="color:#ce9178">&#x27;&#x27;</span><span style="color:#d4d4d4">)</span></div>
<div class="t" style="left:68.00px;top:181.84px;font-family:'Liberation Mono',monospace;font-size:13px;line-height:13px;letter-spacing:-0.104px"><span style="color:#569cd6">def</span><span style="color:#d4d4d4"> </span><span style="color:#dcdcaa">install_rez_from_source</span><span style="color:#d4d4d4">(</span><span style="color:#9cdcfe">dest_dir</span><span style="color:#d4d4d4">):</span></div>
<div class="t" style="left:98.79px;top:200.84px;font-family:'Liberation Mono',monospace;font-size:13px;line-height:13px;letter-spacing:-0.104px"><span style="color:#d4d4d4">_, py_executable = get_virtualenv_py_executable(dest_dir)</span></div>
<div class="t" style="left:98.79px;top:238.84px;font-family:'Liberation Mono',monospace;font-size:13px;line-height:13px;letter-spacing:-0.104px"><span style="color:#6a9955"># install via pip</span></div>
<div class="t" style="left:98.79px;top:257.84px;font-family:'Liberation Mono',monospace;font-size:13px;line-height:13px;letter-spacing:-0.104px"><span style="color:#d4d4d4">run_command([py_executable, </span><span style="color:#ce9178">&quot;-m&quot;</span><span style="color:#d4d4d4">, </span><span style="color:#ce9178">&quot;pip&quot;</span><span style="color:#d4d4d4">, </span><span style="color:#ce9178">&quot;install&quot;</span><span style="color:#d4d4d4">, </span><span style="color:#ce9178">&quot;-e&quot;</span><span style="color:#d4d4d4">, </span><span style="color:#ce9178">&quot;.&quot;</span><span style="color:#d4d4d4">])</span></div>
<div class="t" style="left:68.00px;top:314.84px;font-family:'Liberation Mono',monospace;font-size:13px;line-height:13px;letter-spacing:-0.104px"><span style="color:#569cd6">def</span><span style="color:#d4d4d4"> </span><span style="color:#dcdcaa">install_as_rez_package</span><span style="color:#d4d4d4">(</span><span style="color:#9cdcfe">repo_path</span><span style="color:#d4d4d4">):</span></div>
<div class="t" style="left:98.79px;top:333.84px;font-family:'Liberation Mono',monospace;font-size:13px;line-height:13px;letter-spacing:-0.104px"><span style="color:#ce9178">&quot;&quot;&quot;Installs rez as a rez package.</span></div>
<div class="t" style="left:98.79px;top:371.84px;font-family:'Liberation Mono',monospace;font-size:13px;line-height:13px;letter-spacing:-0.104px"><span style="color:#ce9178">Note that this can be used to install new variants of rez into an existing</span></div>
<div class="t" style="left:98.79px;top:390.84px;font-family:'Liberation Mono',monospace;font-size:13px;line-height:13px;letter-spacing:-0.104px"><span style="color:#ce9178">rez package (you may require multiple platform installations for example).</span></div>
<div class="t" style="left:98.79px;top:428.84px;font-family:'Liberation Mono',monospace;font-size:13px;line-height:13px;letter-spacing:-0.104px"><span style="color:#ce9178">Args:</span></div>
<div class="t" style="left:129.58px;top:447.84px;font-family:'Liberation Mono',monospace;font-size:13px;line-height:13px;letter-spacing:-0.104px"><span style="color:#ce9178">repo_path (str): Full path to the package repository to install into.</span></div>
<div class="t" style="left:98.79px;top:466.84px;font-family:'Liberation Mono',monospace;font-size:13px;line-height:13px;letter-spacing:-0.104px"><span style="color:#ce9178">&quot;&quot;&quot;</span></div>
<div class="t" style="left:98.79px;top:485.84px;font-family:'Liberation Mono',monospace;font-size:13px;line-height:13px;letter-spacing:-0.104px"><span style="color:#c586c0">from</span><span style="color:#d4d4d4"> tempfile </span><span style="color:#c586c0">import</span><span style="color:#d4d4d4"> mkdtemp</span></div>
<div class="t" style="left:98.79px;top:523.84px;font-family:'Liberation Mono',monospace;font-size:13px;line-height:13px;letter-spacing:-0.104px"><span style="color:#6a9955"># do a temp production (virtualenv-based) rez install</span></div>
<div class="t" style="left:98.79px;top:542.84px;font-family:'Liberation Mono',monospace;font-size:13px;line-height:13px;letter-spacing:-0.104px"><span style="color:#d4d4d4">tmpdir = mkdtemp(</span><span style="color:#9cdcfe">prefix</span><span style="color:#d4d4d4">=</span><span style="color:#ce9178">&quot;rez-install-&quot;</span><span style="color:#d4d4d4">)</span></div>
<div class="t" style="left:98.79px;top:561.84px;font-family:'Liberation Mono',monospace;font-size:13px;line-height:13px;letter-spacing:-0.104px"><span style="color:#d4d4d4">install(tmpdir)</span></div>
<div class="t" style="left:98.79px;top:580.84px;font-family:'Liberation Mono',monospace;font-size:13px;line-height:13px;letter-spacing:-0.104px"><span style="color:#d4d4d4">_, py_executable = get_virtualenv_py_executable(tmpdir)</span></div>
<div class="t" style="left:98.79px;top:618.84px;font-family:'Liberation Mono',monospace;font-size:13px;line-height:13px;letter-spacing:-0.104px"><span style="color:#c586c0">try</span><span style="color:#d4d4d4">:</span></div>
<div class="t" style="left:129.58px;top:637.84px;font-family:'Liberation Mono',monospace;font-size:13px;line-height:13px;letter-spacing:-0.104px"><span style="color:#6a9955"># This extracts a rez package from the installation. See</span></div>
<div class="t" style="left:129.58px;top:656.84px;font-family:'Liberation Mono',monospace;font-size:13px;line-height:13px;letter-spacing:-0.104px"><span style="color:#6a9955"># rez.utils.installer.install_as_rez_package for more details.</span></div>
<div class="t" style="left:129.58px;top:675.84px;font-family:'Liberation Mono',monospace;font-size:13px;line-height:13px;letter-spacing:-0.104px"><span style="color:#6a9955">#</span></div>
<div class="t" style="left:129.58px;top:694.84px;font-family:'Liberation Mono',monospace;font-size:13px;line-height:13px;letter-spacing:-0.104px"><span style="color:#d4d4d4">args = (</span></div>
<div class="t" style="left:160.36px;top:713.84px;font-family:'Liberation Mono',monospace;font-size:13px;line-height:13px;letter-spacing:-0.104px"><span style="color:#d4d4d4">py_executable, </span><span style="color:#ce9178">&quot;-E&quot;</span><span style="color:#d4d4d4">, </span><span style="color:#ce9178">&quot;-c&quot;</span><span style="color:#d4d4d4">,</span></div>
<div class="t" style="left:160.36px;top:732.84px;font-family:'Liberation Mono',monospace;font-size:13px;line-height:13px;letter-spacing:-0.104px"><span style="color:#569cd6">r</span><span style="color:#d16969">&quot;from rez.utils.installer import install_as_rez_package;&quot;</span></div>
<div class="t" style="left:160.36px;top:751.84px;font-family:'Liberation Mono',monospace;font-size:13px;line-height:13px;letter-spacing:-0.104px"><span style="color:#569cd6">r</span><span style="color:#d16969">&quot;install_as_rez_package(%r)&quot;</span><span style="color:#d4d4d4"> % repo_path</span></div>
<div class="t" style="left:129.58px;top:770.84px;font-family:'Liberation Mono',monospace;font-size:13px;line-height:13px;letter-spacing:-0.104px"><span style="color:#d4d4d4">)</span></div>
<div class="t" style="left:129.58px;top:789.84px;font-family:'Liberation Mono',monospace;font-size:13px;line-height:13px;letter-spacing:-0.104px"><span style="color:#dcdcaa">print</span><span style="color:#d4d4d4">(subprocess.check_output(args))</span></div>
<div class="t" style="left:98.79px;top:827.84px;font-family:'Liberation Mono',monospace;font-size:13px;line-height:13px;letter-spacing:-0.104px"><span style="color:#c586c0">finally</span><span style="color:#d4d4d4">:</span></div>
</div>
<div class="a" style="left:1594px;top:173px;width:112px;height:837px;overflow:hidden">
<div class="a" style="left:0;top:430px;width:112px;height:2px;background:#264f78"></div>
<div class="a" style="left:0;top:64px;width:112px;height:4px;background:rgba(90,90,90,.6)"></div>
<div class="a" style="left:0;top:-0.7px;width:672px;transform:scale(0.16667);transform-origin:0 0;font-family:'Liberation Mono',monospace;font-size:10px;line-height:12px;white-space:pre;font-weight:700;opacity:.95">
<span style="color:#6a9955"># SPDX-License-Identifier: Apache-2.0</span>
<span style="color:#6a9955"># Copyright Contributors to the Rez Project</span>


<span style="color:#ce9178">&quot;&quot;&quot;</span>
<span style="color:#ce9178">This script uses venv/virtualenv to create a standard, production installation</span>
<span style="color:#ce9178">of rez.</span>
<span style="color:#ce9178">&quot;&quot;&quot;</span>
<span style="color:#c586c0">from</span><span style="color:#d4d4d4"> </span><span style="color:#d4d4d4">__future__</span><span style="color:#d4d4d4"> </span><span style="color:#c586c0">import</span><span style="color:#d4d4d4"> </span><span style="color:#d4d4d4">print_function</span>

<span style="color:#c586c0">import</span><span style="color:#d4d4d4"> </span><span style="color:#d4d4d4">argparse</span>
<span style="color:#c586c0">import</span><span style="color:#d4d4d4"> </span><span style="color:#d4d4d4">os</span>
<span style="color:#c586c0">import</span><span style="color:#d4d4d4"> </span><span style="color:#d4d4d4">sys</span>
<span style="color:#c586c0">import</span><span style="color:#d4d4d4"> </span><span style="color:#d4d4d4">shutil</span>
<span style="color:#c586c0">import</span><span style="color:#d4d4d4"> </span><span style="color:#d4d4d4">os</span><span style="color:#d4d4d4">.</span><span style="color:#d4d4d4">path</span>
<span style="color:#c586c0">import</span><span style="color:#d4d4d4"> </span><span style="color:#d4d4d4">subprocess</span>


<span style="color:#d4d4d4">source_path</span><span style="color:#d4d4d4"> </span><span style="color:#d4d4d4">=</span><span style="color:#d4d4d4"> </span><span style="color:#d4d4d4">os</span><span style="color:#d4d4d4">.</span><span style="color:#d4d4d4">path</span><span style="color:#d4d4d4">.</span><span style="color:#d4d4d4">dirname</span><span style="color:#d4d4d4">(</span><span style="color:#d4d4d4">os</span><span style="color:#d4d4d4">.</span><span style="color:#d4d4d4">path</span><span style="color:#d4d4d4">.</span><span style="color:#d4d4d4">realpath</span><span style="color:#d4d4d4">(</span><span style="color:#d4d4d4">__file__</span><span style="color:#d4d4d4">)</span><span style="color:#d4d4d4">)</span>
<span style="color:#d4d4d4">src_path</span><span style="color:#d4d4d4"> </span><span style="color:#d4d4d4">=</span><span style="color:#d4d4d4"> </span><span style="color:#d4d4d4">os</span><span style="color:#d4d4d4">.</span><span style="color:#d4d4d4">path</span><span style="color:#d4d4d4">.</span><span style="color:#d4d4d4">join</span><span style="color:#d4d4d4">(</span><span style="color:#d4d4d4">source_path</span><span style="color:#d4d4d4">,</span><span style="color:#d4d4d4"> </span><span style="color:#ce9178">&quot;src&quot;</span><span style="color:#d4d4d4">)</span>
<span style="color:#d4d4d4">sys</span><span style="color:#d4d4d4">.</span><span style="color:#d4d4d4">path</span><span style="color:#d4d4d4">.</span><span style="color:#d4d4d4">insert</span><span style="color:#d4d4d4">(</span><span style="color:#d4d4d4">0</span><span style="color:#d4d4d4">,</span><span style="color:#d4d4d4"> </span><span style="color:#d4d4d4">src_path</span><span style="color:#d4d4d4">)</span>

<span style="color:#6a9955"># Note: The following imports are carefully selected, they will work even</span>
<span style="color:#6a9955"># though rez is not yet built.</span>
<span style="color:#6a9955">#</span>
<span style="color:#c586c0">from</span><span style="color:#d4d4d4"> </span><span style="color:#d4d4d4">rez</span><span style="color:#d4d4d4">.</span><span style="color:#d4d4d4">utils</span><span style="color:#d4d4d4">.</span><span style="color:#d4d4d4">_version</span><span style="color:#d4d4d4"> </span><span style="color:#c586c0">import</span><span style="color:#d4d4d4"> </span><span style="color:#d4d4d4">_rez_version</span><span style="color:#d4d4d4">  </span><span style="color:#6a9955"># noqa: E402</span>
<span style="color:#c586c0">from</span><span style="color:#d4d4d4"> </span><span style="color:#d4d4d4">rez</span><span style="color:#d4d4d4">.</span><span style="color:#d4d4d4">utils</span><span style="color:#d4d4d4">.</span><span style="color:#d4d4d4">which</span><span style="color:#d4d4d4"> </span><span style="color:#c586c0">import</span><span style="color:#d4d4d4"> </span><span style="color:#d4d4d4">which</span><span style="color:#d4d4d4">  </span><span style="color:#6a9955"># noqa: E402</span>
<span style="color:#c586c0">from</span><span style="color:#d4d4d4"> </span><span style="color:#d4d4d4">rez</span><span style="color:#d4d4d4">.</span><span style="color:#d4d4d4">cli</span><span style="color:#d4d4d4">.</span><span style="color:#d4d4d4">_entry_points</span><span style="color:#d4d4d4"> </span><span style="color:#c586c0">import</span><span style="color:#d4d4d4"> </span><span style="color:#d4d4d4">get_specifications</span><span style="color:#d4d4d4">  </span><span style="color:#6a9955"># noqa: E402</span>
<span style="color:#c586c0">from</span><span style="color:#d4d4d4"> </span><span style="color:#d4d4d4">rez</span><span style="color:#d4d4d4">.</span><span style="color:#d4d4d4">vendor</span><span style="color:#d4d4d4">.</span><span style="color:#d4d4d4">distlib</span><span style="color:#d4d4d4">.</span><span style="color:#d4d4d4">scripts</span><span style="color:#d4d4d4"> </span><span style="color:#c586c0">import</span><span style="color:#d4d4d4"> </span><span style="color:#d4d4d4">ScriptMaker</span><span style="color:#d4d4d4">  </span><span style="color:#6a9955"># noqa: E402</span>

<span style="color:#6a9955"># switch to builtin venv if python 3.7+</span>
<span style="color:#6a9955">#</span>
<span style="color:#6a9955"># Note: There are issues using venv with 3.6. Installed pip version is 18.1</span>
<span style="color:#6a9955"># (compared to 19.2.3 for python 3.7). This means that pip does not support</span>
<span style="color:#6a9955"># python_requires, and will try to install latest.</span>
<span style="color:#6a9955">#</span>
<span style="color:#d4d4d4">use_venv</span><span style="color:#d4d4d4"> </span><span style="color:#d4d4d4">=</span><span style="color:#d4d4d4"> </span><span style="color:#d4d4d4">(</span><span style="color:#d4d4d4">sys</span><span style="color:#d4d4d4">.</span><span style="color:#d4d4d4">version_info</span><span style="color:#d4d4d4">[</span><span style="color:#d4d4d4">:</span><span style="color:#d4d4d4">2</span><span style="color:#d4d4d4">]</span><span style="color:#d4d4d4"> </span><span style="color:#d4d4d4">&gt;</span><span style="color:#d4d4d4">=</span><span style="color:#d4d4d4"> </span><span style="color:#d4d4d4">(</span><span style="color:#d4d4d4">3</span><span style="color:#d4d4d4">,</span><span style="color:#d4d4d4"> </span><span style="color:#d4d4d4">7</span><span style="color:#d4d4d4">)</span><span style="color:#d4d4d4">)</span>

<span style="color:#c586c0">if</span><span style="color:#d4d4d4"> </span><span style="color:#d4d4d4">use_venv</span><span style="color:#d4d4d4">:</span>
<span style="color:#d4d4d4">    </span><span style="color:#c586c0">import</span><span style="color:#d4d4d4"> </span><span style="color:#d4d4d4">venv</span>
<span style="color:#c586c0">else</span><span style="color:#d4d4d4">:</span>
<span style="color:#d4d4d4">    </span><span style="color:#c586c0">from</span><span style="color:#d4d4d4"> </span><span style="color:#d4d4d4">build_utils</span><span style="color:#d4d4d4">.</span><span style="color:#d4d4d4">virtualenv</span><span style="color:#d4d4d4">.</span><span style="color:#d4d4d4">virtualenv</span><span style="color:#d4d4d4"> </span><span style="color:#c586c0">import</span><span style="color:#d4d4d4"> </span><span style="color:#d4d4d4">create_environment</span><span style="color:#d4d4d4">,</span><span style="color:#d4d4d4"> </span><span style="color:#d4d4d4">path_locations</span>


<span style="color:#569cd6">def</span><span style="color:#d4d4d4"> </span><span style="color:#dcdcaa">create_virtual_environment</span><span style="color:#d4d4d4">(</span><span style="color:#9cdcfe">dest_dir</span><span style="color:#d4d4d4">)</span><span style="color:#d4d4d4">:</span>
<span style="color:#d4d4d4">    </span><span style="color:#c586c0">if</span><span style="color:#d4d4d4"> </span><span style="color:#d4d4d4">use_venv</span><span style="color:#d4d4d4">:</span>
<span style="color:#d4d4d4">        </span><span style="color:#d4d4d4">builder</span><span style="color:#d4d4d4"> </span><span style="color:#d4d4d4">=</span><span style="color:#d4d4d4"> </span><span style="color:#d4d4d4">venv</span><span style="color:#d4d4d4">.</span><span style="color:#d4d4d4">EnvBuilder</span><span style="color:#d4d4d4">(</span><span style="color:#d4d4d4">with_pip</span><span style="color:#d4d4d4">=</span><span style="color:#569cd6">True</span><span style="color:#d4d4d4">)</span>
<span style="color:#d4d4d4">        </span><span style="color:#d4d4d4">builder</span><span style="color:#d4d4d4">.</span><span style="color:#d4d4d4">create</span><span style="color:#d4d4d4">(</span><span style="color:#d4d4d4">dest_dir</span><span style="color:#d4d4d4">)</span>
<span style="color:#d4d4d4">    </span><span style="color:#c586c0">else</span><span style="color:#d4d4d4">:</span>
<span style="color:#d4d4d4">        </span><span style="color:#d4d4d4">create_environment</span><span style="color:#d4d4d4">(</span><span style="color:#d4d4d4">dest_dir</span><span style="color:#d4d4d4">)</span>


<span style="color:#569cd6">def</span><span style="color:#d4d4d4"> </span><span style="color:#dcdcaa">get_virtualenv_bin_dir</span><span style="color:#d4d4d4">(</span><span style="color:#9cdcfe">dest_dir</span><span style="color:#d4d4d4">)</span><span style="color:#d4d4d4">:</span>
<span style="color:#d4d4d4">    </span><span style="color:#c586c0">if</span><span style="color:#d4d4d4"> </span><span style="color:#d4d4d4">use_venv</span><span style="color:#d4d4d4">:</span>
<span style="color:#d4d4d4">        </span><span style="color:#d4d4d4">builder</span><span style="color:#d4d4d4"> </span><span style="color:#d4d4d4">=</span><span style="color:#d4d4d4"> </span><span style="color:#d4d4d4">venv</span><span style="color:#d4d4d4">.</span><span style="color:#d4d4d4">EnvBuilder</span><span style="color:#d4d4d4">(</span><span style="color:#d4d4d4">)</span>
<span style="color:#d4d4d4">        </span><span style="color:#d4d4d4">context</span><span style="color:#d4d4d4"> </span><span style="color:#d4d4d4">=</span><span style="color:#d4d4d4"> </span><span style="color:#d4d4d4">builder</span><span style="color:#d4d4d4">.</span><span style="color:#d4d4d4">ensure_directories</span><span style="color:#d4d4d4">(</span><span style="color:#d4d4d4">dest_dir</span><span style="color:#d4d4d4">)</span>
<span style="color:#d4d4d4">        </span><span style="color:#c586c0">return</span><span style="color:#d4d4d4"> </span><span style="color:#d4d4d4">context</span><span style="color:#d4d4d4">.</span><span style="color:#d4d4d4">bin_path</span>
<span style="color:#d4d4d4">    </span><span style="color:#c586c0">else</span><span style="color:#d4d4d4">:</span>
<span style="color:#d4d4d4">        </span><span style="color:#d4d4d4">_</span><span style="color:#d4d4d4">,</span><span style="color:#d4d4d4"> </span><span style="color:#d4d4d4">_</span><span style="color:#d4d4d4">,</span><span style="color:#d4d4d4"> </span><span style="color:#d4d4d4">_</span><span style="color:#d4d4d4">,</span><span style="color:#d4d4d4"> </span><span style="color:#d4d4d4">bin_dir</span><span style="color:#d4d4d4"> </span><span style="color:#d4d4d4">=</span><span style="color:#d4d4d4"> </span><span style="color:#d4d4d4">path_locations</span><span style="color:#d4d4d4">(</span><span style="color:#d4d4d4">dest_dir</span><span style="color:#d4d4d4">)</span>
<span style="color:#d4d4d4">        </span><span style="color:#c586c0">return</span><span style="color:#d4d4d4"> </span><span style="color:#d4d4d4">bin_dir</span>


<span style="color:#569cd6">def</span><span style="color:#d4d4d4"> </span><span style="color:#dcdcaa">get_virtualenv_py_executable</span><span style="color:#d4d4d4">(</span><span style="color:#9cdcfe">dest_dir</span><span style="color:#d4d4d4">)</span><span style="color:#d4d4d4">:</span>
<span style="color:#d4d4d4">    </span><span style="color:#6a9955"># get virtualenv&#x27;s python executable</span>
<span style="color:#d4d4d4">    </span><span style="color:#d4d4d4">bin_dir</span><span style="color:#d4d4d4"> </span><span style="color:#d4d4d4">=</span><span style="color:#d4d4d4"> </span><span style="color:#d4d4d4">get_virtualenv_bin_dir</span><span style="color:#d4d4d4">(</span><span style="color:#d4d4d4">dest_dir</span><span style="color:#d4d4d4">)</span>

<span style="color:#d4d4d4">    </span><span style="color:#d4d4d4">env</span><span style="color:#d4d4d4"> </span><span style="color:#d4d4d4">=</span><span style="color:#d4d4d4"> </span><span style="color:#d4d4d4">{</span>
<span style="color:#d4d4d4">        </span><span style="color:#ce9178">&quot;PATH&quot;</span><span style="color:#d4d4d4">:</span><span style="color:#d4d4d4"> </span><span style="color:#d4d4d4">bin_dir</span><span style="color:#d4d4d4">,</span>
<span style="color:#d4d4d4">        </span><span style="color:#ce9178">&quot;SYSTEMROOT&quot;</span><span style="color:#d4d4d4">:</span><span style="color:#d4d4d4"> </span><span style="color:#d4d4d4">os</span><span style="color:#d4d4d4">.</span><span style="color:#d4d4d4">environ</span><span style="color:#d4d4d4">.</span><span style="color:#d4d4d4">get</span><span style="color:#d4d4d4">(</span><span style="color:#ce9178">&quot;SYSTEMROOT&quot;</span><span style="color:#d4d4d4">,</span><span style="color:#d4d4d4"> </span><span style="color:#ce9178">&quot;&quot;</span><span style="color:#d4d4d4">)</span>
<span style="color:#d4d4d4">    </span><span style="color:#d4d4d4">}</span>

<span style="color:#d4d4d4">    </span><span style="color:#c586c0">return</span><span style="color:#d4d4d4"> </span><span style="color:#d4d4d4">bin_dir</span><span style="color:#d4d4d4">,</span><span style="color:#d4d4d4"> </span><span style="color:#d4d4d4">which</span><span style="color:#d4d4d4">(</span><span style="color:#ce9178">&quot;python&quot;</span><span style="color:#d4d4d4">,</span><span style="color:#d4d4d4"> </span><span style="color:#d4d4d4">env</span><span style="color:#d4d4d4">=</span><span style="color:#d4d4d4">env</span><span style="color:#d4d4d4">)</span>


<span style="color:#569cd6">def</span><span style="color:#d4d4d4"> </span><span style="color:#dcdcaa">run_command</span><span style="color:#d4d4d4">(</span><span style="color:#9cdcfe">args</span><span style="color:#d4d4d4">,</span><span style="color:#d4d4d4"> </span><span style="color:#9cdcfe">cwd</span><span style="color:#d4d4d4">=</span><span style="color:#9cdcfe">source_path</span><span style="color:#d4d4d4">)</span><span style="color:#d4d4d4">:</span>
<span style="color:#d4d4d4">    </span><span style="color:#c586c0">if</span><span style="color:#d4d4d4"> </span><span style="color:#d4d4d4">opts</span><span style="color:#d4d4d4">.</span><span style="color:#d4d4d4">verbose</span><span style="color:#d4d4d4">:</span>
<span style="color:#d4d4d4">        </span><span style="color:#dcdcaa">print</span><span style="color:#d4d4d4">(</span><span style="color:#ce9178">&quot;running in %s: %s&quot;</span><span style="color:#d4d4d4"> </span><span style="color:#d4d4d4">%</span><span style="color:#d4d4d4"> </span><span style="color:#d4d4d4">(</span><span style="color:#d4d4d4">cwd</span><span style="color:#d4d4d4">,</span><span style="color:#d4d4d4"> </span><span style="color:#ce9178">&quot; &quot;</span><span style="color:#d4d4d4">.</span><span style="color:#d4d4d4">join</span><span style="color:#d4d4d4">(</span><span style="color:#d4d4d4">args</span><span style="color:#d4d4d4">)</span><span style="color:#d4d4d4">)</span><span style="color:#d4d4d4">)</span>
<span style="color:#d4d4d4">    </span><span style="color:#c586c0">return</span><span style="color:#d4d4d4"> </span><span style="color:#d4d4d4">subprocess</span><span style="color:#d4d4d4">.</span><span style="color:#d4d4d4">check_output</span><span style="color:#d4d4d4">(</span><span style="color:#d4d4d4">args</span><span style="color:#d4d4d4">,</span><span style="color:#d4d4d4"> </span><span style="color:#d4d4d4">cwd</span><span style="color:#d4d4d4">=</span><span style="color:#d4d4d4">source_path</span><span style="color:#d4d4d4">)</span>


<span style="color:#569cd6">def</span><span style="color:#d4d4d4"> </span><span style="color:#dcdcaa">patch_rez_binaries</span><span style="color:#d4d4d4">(</span><span style="color:#9cdcfe">dest_dir</span><span style="color:#d4d4d4">)</span><span style="color:#d4d4d4">:</span>
<span style="color:#d4d4d4">    </span><span style="color:#d4d4d4">virtualenv_bin_path</span><span style="color:#d4d4d4">,</span><span style="color:#d4d4d4"> </span><span style="color:#d4d4d4">py_executable</span><span style="color:#d4d4d4"> </span><span style="color:#d4d4d4">=</span><span style="color:#d4d4d4"> </span><span style="color:#d4d4d4">get_virtualenv_py_executable</span><span style="color:#d4d4d4">(</span><span style="color:#d4d4d4">dest_dir</span><span style="color:#d4d4d4">)</span>

<span style="color:#d4d4d4">    </span><span style="color:#d4d4d4">specs</span><span style="color:#d4d4d4"> </span><span style="color:#d4d4d4">=</span><span style="color:#d4d4d4"> </span><span style="color:#d4d4d4">get_specifications</span><span style="color:#d4d4d4">(</span><span style="color:#d4d4d4">)</span>

<span style="color:#d4d4d4">    </span><span style="color:#6a9955"># delete rez bin files written into virtualenv</span>
<span style="color:#d4d4d4">    </span><span style="color:#c586c0">for</span><span style="color:#d4d4d4"> </span><span style="color:#d4d4d4">name</span><span style="color:#d4d4d4"> </span><span style="color:#c586c0">in</span><span style="color:#d4d4d4"> </span><span style="color:#d4d4d4">specs</span><span style="color:#d4d4d4">.</span><span style="color:#d4d4d4">keys</span><span style="color:#d4d4d4">(</span><span style="color:#d4d4d4">)</span><span style="color:#d4d4d4">:</span>
<span style="color:#d4d4d4">        </span><span style="color:#d4d4d4">filepath</span><span style="color:#d4d4d4"> </span><span style="color:#d4d4d4">=</span><span style="color:#d4d4d4"> </span><span style="color:#d4d4d4">os</span><span style="color:#d4d4d4">.</span><span style="color:#d4d4d4">path</span><span style="color:#d4d4d4">.</span><span style="color:#d4d4d4">join</span><span style="color:#d4d4d4">(</span><span style="color:#d4d4d4">virtualenv_bin_path</span><span style="color:#d4d4d4">,</span><span style="color:#d4d4d4"> </span><span style="color:#d4d4d4">name</span><span style="color:#d4d4d4">)</span>
<span style="color:#d4d4d4">        </span><span style="color:#c586c0">if</span><span style="color:#d4d4d4"> </span><span style="color:#d4d4d4">os</span><span style="color:#d4d4d4">.</span><span style="color:#d4d4d4">path</span><span style="color:#d4d4d4">.</span><span style="color:#d4d4d4">isfile</span><span style="color:#d4d4d4">(</span><span style="color:#d4d4d4">filepath</span><span style="color:#d4d4d4">)</span><span style="color:#d4d4d4">:</span>
<span style="color:#d4d4d4">            </span><span style="color:#d4d4d4">os</span><span style="color:#d4d4d4">.</span><span style="color:#d4d4d4">remove</span><span style="color:#d4d4d4">(</span><span style="color:#d4d4d4">filepath</span><span style="color:#d4d4d4">)</span>

<span style="color:#d4d4d4">    </span><span style="color:#6a9955"># write patched bins instead. These go into &#x27;bin/rez&#x27; subdirectory, which</span>
<span style="color:#d4d4d4">    </span><span style="color:#6a9955"># gives us a bin dir containing only rez binaries. This is what we want -</span>
<span style="color:#d4d4d4">    </span><span style="color:#6a9955"># we don&#x27;t want resolved envs accidentally getting the virtualenv&#x27;s &#x27;python&#x27;.</span>
<span style="color:#d4d4d4">    </span><span style="color:#d4d4d4">dest_bin_path</span><span style="color:#d4d4d4"> </span><span style="color:#d4d4d4">=</span><span style="color:#d4d4d4"> </span><span style="color:#d4d4d4">os</span><span style="color:#d4d4d4">.</span><span style="color:#d4d4d4">path</span><span style="color:#d4d4d4">.</span><span style="color:#d4d4d4">join</span><span style="color:#d4d4d4">(</span><span style="color:#d4d4d4">virtualenv_bin_path</span><span style="color:#d4d4d4">,</span><span style="color:#d4d4d4"> </span><span style="color:#ce9178">&quot;rez&quot;</span><span style="color:#d4d4d4">)</span>
<span style="color:#d4d4d4">    </span><span style="color:#c586c0">if</span><span style="color:#d4d4d4"> </span><span style="color:#d4d4d4">os</span><span style="color:#d4d4d4">.</span><span style="color:#d4d4d4">path</span><span style="color:#d4d4d4">.</span><span style="color:#d4d4d4">exists</span><span style="color:#d4d4d4">(</span><span style="color:#d4d4d4">dest_bin_path</span><span style="color:#d4d4d4">)</span><span style="color:#d4d4d4">:</span>
<span style="color:#d4d4d4">        </span><span style="color:#d4d4d4">shutil</span><span style="color:#d4d4d4">.</span><span style="color:#d4d4d4">rmtree</span><span style="color:#d4d4d4">(</span><span style="color:#d4d4d4">dest_bin_path</span><span style="color:#d4d4d4">)</span>
<span style="color:#d4d4d4">    </span><span style="color:#d4d4d4">os</span><span style="color:#d4d4d4">.</span><span style="color:#d4d4d4">makedirs</span><span style="color:#d4d4d4">(</span><span style="color:#d4d4d4">dest_bin_path</span><span style="color:#d4d4d4">)</span>

<span style="color:#d4d4d4">    </span><span style="color:#d4d4d4">maker</span><span style="color:#d4d4d4"> </span><span style="color:#d4d4d4">=</span><span style="color:#d4d4d4"> </span><span style="color:#d4d4d4">ScriptMaker</span><span style="color:#d4d4d4">(</span>
<span style="color:#d4d4d4">        </span><span style="color:#6a9955"># note: no filenames are referenced in any specifications, so</span>
<span style="color:#d4d4d4">        </span><span style="color:#6a9955"># source_dir is unused</span>
<span style="color:#d4d4d4">        </span><span style="color:#d4d4d4">source_dir</span><span style="color:#d4d4d4">=</span><span style="color:#569cd6">None</span><span style="color:#d4d4d4">,</span>
<span style="color:#d4d4d4">        </span><span style="color:#d4d4d4">target_dir</span><span style="color:#d4d4d4">=</span><span style="color:#d4d4d4">dest_bin_path</span>
<span style="color:#d4d4d4">    </span><span style="color:#d4d4d4">)</span>

<span style="color:#d4d4d4">    </span><span style="color:#d4d4d4">maker</span><span style="color:#d4d4d4">.</span><span style="color:#d4d4d4">executable</span><span style="color:#d4d4d4"> </span><span style="color:#d4d4d4">=</span><span style="color:#d4d4d4"> </span><span style="color:#d4d4d4">py_executable</span>

<span style="color:#d4d4d4">    </span><span style="color:#d4d4d4">maker</span><span style="color:#d4d4d4">.</span><span style="color:#d4d4d4">make_multiple</span><span style="color:#d4d4d4">(</span>
<span style="color:#d4d4d4">        </span><span style="color:#d4d4d4">specifications</span><span style="color:#d4d4d4">=</span><span style="color:#d4d4d4">specs</span><span style="color:#d4d4d4">.</span><span style="color:#d4d4d4">values</span><span style="color:#d4d4d4">(</span><span style="color:#d4d4d4">)</span><span style="color:#d4d4d4">,</span>
<span style="color:#d4d4d4">        </span><span style="color:#6a9955"># the -E arg is crucial - it means rez cli tools still work within a</span>
<span style="color:#d4d4d4">        </span><span style="color:#6a9955"># rez-resolved env, even if PYTHONPATH or related env-vars would have</span>
<span style="color:#d4d4d4">        </span><span style="color:#6a9955"># otherwise changed rez&#x27;s behaviour</span>
<span style="color:#d4d4d4">        </span><span style="color:#d4d4d4">options</span><span style="color:#d4d4d4">=</span><span style="color:#d4d4d4">dict</span><span style="color:#d4d4d4">(</span><span style="color:#d4d4d4">interpreter_args</span><span style="color:#d4d4d4">=</span><span style="color:#d4d4d4">[</span><span style="color:#ce9178">&quot;-E&quot;</span><span style="color:#d4d4d4">]</span><span style="color:#d4d4d4">)</span>
<span style="color:#d4d4d4">    </span><span style="color:#d4d4d4">)</span>


<span style="color:#569cd6">def</span><span style="color:#d4d4d4"> </span><span style="color:#dcdcaa">copy_completion_scripts</span><span style="color:#d4d4d4">(</span><span style="color:#9cdcfe">dest_dir</span><span style="color:#d4d4d4">)</span><span style="color:#d4d4d4">:</span>
<span style="color:#d4d4d4">    </span><span style="color:#6a9955"># find completion dir in rez package</span>
<span style="color:#d4d4d4">    </span><span style="color:#d4d4d4">path</span><span style="color:#d4d4d4"> </span><span style="color:#d4d4d4">=</span><span style="color:#d4d4d4"> </span><span style="color:#d4d4d4">os</span><span style="color:#d4d4d4">.</span><span style="color:#d4d4d4">path</span><span style="color:#d4d4d4">.</span><span style="color:#d4d4d4">join</span><span style="color:#d4d4d4">(</span><span style="color:#d4d4d4">dest_dir</span><span style="color:#d4d4d4">,</span><span style="color:#d4d4d4"> </span><span style="color:#ce9178">&quot;lib&quot;</span><span style="color:#d4d4d4">)</span>
<span style="color:#d4d4d4">    </span><span style="color:#d4d4d4">completion_path</span><span style="color:#d4d4d4"> </span><span style="color:#d4d4d4">=</span><span style="color:#d4d4d4"> </span><span style="color:#569cd6">None</span>
<span style="color:#d4d4d4">    </span><span style="color:#c586c0">for</span><span style="color:#d4d4d4"> </span><span style="color:#d4d4d4">root</span><span style="color:#d4d4d4">,</span><span style="color:#d4d4d4"> </span><span style="color:#d4d4d4">dirs</span><span style="color:#d4d4d4">,</span><span style="color:#d4d4d4"> </span><span style="color:#d4d4d4">_</span><span style="color:#d4d4d4"> </span><span style="color:#c586c0">in</span><span style="color:#d4d4d4"> </span><span style="color:#d4d4d4">os</span><span style="color:#d4d4d4">.</span><span style="color:#d4d4d4">walk</span><span style="color:#d4d4d4">(</span><span style="color:#d4d4d4">path</span><span style="color:#d4d4d4">)</span><span style="color:#d4d4d4">:</span>
<span style="color:#d4d4d4">        </span><span style="color:#c586c0">if</span><span style="color:#d4d4d4"> </span><span style="color:#d4d4d4">root</span><span style="color:#d4d4d4">.</span><span style="color:#d4d4d4">endswith</span><span style="color:#d4d4d4">(</span><span style="color:#d4d4d4">os</span><span style="color:#d4d4d4">.</span><span style="color:#d4d4d4">path</span><span style="color:#d4d4d4">.</span><span style="color:#d4d4d4">sep</span><span style="color:#d4d4d4"> </span><span style="color:#d4d4d4">+</span><span style="color:#d4d4d4"> </span><span style="color:#ce9178">&quot;rez&quot;</span><span style="color:#d4d4d4">)</span><span style="color:#d4d4d4"> </span><span style="color:#c586c0">and</span><span style="color:#d4d4d4"> </span><span style="color:#ce9178">&quot;completion&quot;</span><span style="color:#d4d4d4"> </span><span style="color:#c586c0">in</span><span style="color:#d4d4d4"> </span><span style="color:#d4d4d4">dirs</span><span style="color:#d4d4d4">:</span>
<span style="color:#d4d4d4">            </span><span style="color:#d4d4d4">completion_path</span><span style="color:#d4d4d4"> </span><span style="color:#d4d4d4">=</span><span style="color:#d4d4d4"> </span><span style="color:#d4d4d4">os</span><span style="color:#d4d4d4">.</span><span style="color:#d4d4d4">path</span><span style="color:#d4d4d4">.</span><span style="color:#d4d4d4">join</span><span style="color:#d4d4d4">(</span><span style="color:#d4d4d4">root</span><span style="color:#d4d4d4">,</span><span style="color:#d4d4d4"> </span><span style="color:#ce9178">&quot;completion&quot;</span><span style="color:#d4d4d4">)</span>
<span style="color:#d4d4d4">            </span><span style="color:#c586c0">break</span>

<span style="color:#d4d4d4">    </span><span style="color:#6a9955"># copy completion scripts into root of virtualenv for ease of use</span>
<span style="color:#d4d4d4">    </span><span style="color:#c586c0">if</span><span style="color:#d4d4d4"> </span><span style="color:#d4d4d4">completion_path</span><span style="color:#d4d4d4">:</span>
<span style="color:#d4d4d4">        </span><span style="color:#d4d4d4">dest_path</span><span style="color:#d4d4d4"> </span><span style="color:#d4d4d4">=</span><span style="color:#d4d4d4"> </span><span style="color:#d4d4d4">os</span><span style="color:#d4d4d4">.</span><span style="color:#d4d4d4">path</span><span style="color:#d4d4d4">.</span><span style="color:#d4d4d4">join</span><span style="color:#d4d4d4">(</span><span style="color:#d4d4d4">dest_dir</span><span style="color:#d4d4d4">,</span><span style="color:#d4d4d4"> </span><span style="color:#ce9178">&quot;completion&quot;</span><span style="color:#d4d4d4">)</span>
<span style="color:#d4d4d4">        </span><span style="color:#c586c0">if</span><span style="color:#d4d4d4"> </span><span style="color:#d4d4d4">os</span><span style="color:#d4d4d4">.</span><span style="color:#d4d4d4">path</span><span style="color:#d4d4d4">.</span><span style="color:#d4d4d4">exists</span><span style="color:#d4d4d4">(</span><span style="color:#d4d4d4">dest_path</span><span style="color:#d4d4d4">)</span><span style="color:#d4d4d4">:</span>
<span style="color:#d4d4d4">            </span><span style="color:#d4d4d4">shutil</span><span style="color:#d4d4d4">.</span><span style="color:#d4d4d4">rmtree</span><span style="color:#d4d4d4">(</span><span style="color:#d4d4d4">dest_path</span><span style="color:#d4d4d4">)</span>
<span style="color:#d4d4d4">        </span><span style="color:#d4d4d4">shutil</span><span style="color:#d4d4d4">.</span><span style="color:#d4d4d4">copytree</span><span style="color:#d4d4d4">(</span><span style="color:#d4d4d4">completion_path</span><span style="color:#d4d4d4">,</span><span style="color:#d4d4d4"> </span><span style="color:#d4d4d4">dest_path</span><span style="color:#d4d4d4">)</span>
<span style="color:#d4d4d4">        </span><span style="color:#c586c0">return</span><span style="color:#d4d4d4"> </span><span style="color:#d4d4d4">dest_path</span>

<span style="color:#d4d4d4">    </span><span style="color:#c586c0">return</span><span style="color:#d4d4d4"> </span><span style="color:#569cd6">None</span>


<span style="color:#569cd6">def</span><span style="color:#d4d4d4"> </span><span style="color:#dcdcaa">install</span><span style="color:#d4d4d4">(</span><span style="color:#9cdcfe">dest_dir</span><span style="color:#d4d4d4">,</span><span style="color:#d4d4d4"> </span><span style="color:#9cdcfe">print_welcome</span><span style="color:#d4d4d4">=</span><span style="color:#569cd6">False</span><span style="color:#d4d4d4">,</span><span style="color:#d4d4d4"> </span><span style="color:#9cdcfe">editable</span><span style="color:#d4d4d4">=</span><span style="color:#569cd6">False</span><span style="color:#d4d4d4">)</span><span style="color:#d4d4d4">:</span>
<span style="color:#ce9178">    &quot;&quot;&quot;Install rez into the given directory.</span>
<span style="color:#ce9178"></span>
<span style="color:#ce9178">    Args:</span>
<span style="color:#ce9178">        dest_dir (str): Full path to the install directory.</span>
<span style="color:#ce9178">    &quot;&quot;&quot;</span>
<span style="color:#d4d4d4">    </span><span style="color:#dcdcaa">print</span><span style="color:#d4d4d4">(</span><span style="color:#ce9178">&quot;installing rez%s to %s...&quot;</span><span style="color:#d4d4d4"> </span><span style="color:#d4d4d4">%</span><span style="color:#d4d4d4"> </span><span style="color:#d4d4d4">(</span><span style="color:#ce9178">&quot; (editable mode)&quot;</span><span style="color:#d4d4d4"> </span><span style="color:#c586c0">if</span><span style="color:#d4d4d4"> </span><span style="color:#d4d4d4">editable</span><span style="color:#d4d4d4"> </span><span style="color:#c586c0">else</span><span style="color:#d4d4d4"> </span><span style="color:#ce9178">&quot;&quot;</span><span style="color:#d4d4d4">,</span><span style="color:#d4d4d4"> </span><span style="color:#d4d4d4">dest_dir</span><span style="color:#d4d4d4">)</span><span style="color:#d4d4d4">)</span>

<span style="color:#d4d4d4">    </span><span style="color:#6a9955"># create the virtualenv</span>
<span style="color:#d4d4d4">    </span><span style="color:#d4d4d4">create_virtual_environment</span><span style="color:#d4d4d4">(</span><span style="color:#d4d4d4">dest_dir</span><span style="color:#d4d4d4">)</span>

<span style="color:#d4d4d4">    </span><span style="color:#6a9955"># install rez from source</span>
<span style="color:#d4d4d4">    </span><span style="color:#d4d4d4">install_rez_from_source</span><span style="color:#d4d4d4">(</span><span style="color:#d4d4d4">dest_dir</span><span style="color:#d4d4d4">)</span>

<span style="color:#d4d4d4">    </span><span style="color:#6a9955"># patch the rez binaries</span>
<span style="color:#d4d4d4">    </span><span style="color:#d4d4d4">patch_rez_binaries</span><span style="color:#d4d4d4">(</span><span style="color:#d4d4d4">dest_dir</span><span style="color:#d4d4d4">)</span>

<span style="color:#d4d4d4">    </span><span style="color:#6a9955"># copy completion scripts into virtualenv</span>
<span style="color:#d4d4d4">    </span><span style="color:#d4d4d4">completion_path</span><span style="color:#d4d4d4"> </span><span style="color:#d4d4d4">=</span><span style="color:#d4d4d4"> </span><span style="color:#d4d4d4">copy_completion_scripts</span><span style="color:#d4d4d4">(</span><span style="color:#d4d4d4">dest_dir</span><span style="color:#d4d4d4">)</span>

<span style="color:#d4d4d4">    </span><span style="color:#6a9955"># mark venv as production rez install. Do not remove - rez uses this!</span>
<span style="color:#d4d4d4">    </span><span style="color:#d4d4d4">virtualenv_bin_dir</span><span style="color:#d4d4d4"> </span><span style="color:#d4d4d4">=</span><span style="color:#d4d4d4"> </span><span style="color:#d4d4d4">get_virtualenv_bin_dir</span><span style="color:#d4d4d4">(</span><span style="color:#d4d4d4">dest_dir</span><span style="color:#d4d4d4">)</span>
<span style="color:#d4d4d4">    </span><span style="color:#d4d4d4">dest_bin_dir</span><span style="color:#d4d4d4"> </span><span style="color:#d4d4d4">=</span><span style="color:#d4d4d4"> </span><span style="color:#d4d4d4">os</span><span style="color:#d4d4d4">.</span><span style="color:#d4d4d4">path</span><span style="color:#d4d4d4">.</span><span style="color:#d4d4d4">join</span><span style="color:#d4d4d4">(</span><span style="color:#d4d4d4">virtualenv_bin_dir</span><span style="color:#d4d4d4">,</span><span style="color:#d4d4d4"> </span><span style="color:#ce9178">&quot;rez&quot;</span><span style="color:#d4d4d4">)</span>
<span style="color:#d4d4d4">    </span><span style="color:#d4d4d4">validation_file</span><span style="color:#d4d4d4"> </span><span style="color:#d4d4d4">=</span><span style="color:#d4d4d4"> </span><span style="color:#d4d4d4">os</span><span style="color:#d4d4d4">.</span><span style="color:#d4d4d4">path</span><span style="color:#d4d4d4">.</span><span style="color:#d4d4d4">join</span><span style="color:#d4d4d4">(</span><span style="color:#d4d4d4">dest_bin_dir</span><span style="color:#d4d4d4">,</span><span style="color:#d4d4d4"> </span><span style="color:#ce9178">&quot;.rez_production_install&quot;</span><span style="color:#d4d4d4">)</span>
<span style="color:#d4d4d4">    </span><span style="color:#c586c0">with</span><span style="color:#d4d4d4"> </span><span style="color:#d4d4d4">open</span><span style="color:#d4d4d4">(</span><span style="color:#d4d4d4">validation_file</span><span style="color:#d4d4d4">,</span><span style="color:#d4d4d4"> </span><span style="color:#ce9178">&#x27;w&#x27;</span><span style="color:#d4d4d4">)</span><span style="color:#d4d4d4"> </span><span style="color:#c586c0">as</span><span style="color:#d4d4d4"> </span><span style="color:#d4d4d4">f</span><span style="color:#d4d4d4">:</span>
<span style="color:#d4d4d4">        </span><span style="color:#d4d4d4">f</span><span style="color:#d4d4d4">.</span><span style="color:#d4d4d4">write</span><span style="color:#d4d4d4">(</span><span style="color:#d4d4d4">_rez_version</span><span style="color:#d4d4d4">)</span>

<span style="color:#d4d4d4">    </span><span style="color:#6a9955"># done</span>
<span style="color:#d4d4d4">    </span><span style="color:#c586c0">if</span><span style="color:#d4d4d4"> </span><span style="color:#d4d4d4">print_welcome</span><span style="color:#d4d4d4">:</span>
<span style="color:#d4d4d4">        </span><span style="color:#dcdcaa">print</span><span style="color:#d4d4d4">(</span><span style="color:#d4d4d4">)</span>
<span style="color:#d4d4d4">        </span><span style="color:#dcdcaa">print</span><span style="color:#d4d4d4">(</span><span style="color:#ce9178">&quot;SUCCESS!&quot;</span><span style="color:#d4d4d4">)</span>
<span style="color:#d4d4d4">        </span><span style="color:#d4d4d4">rez_exe</span><span style="color:#d4d4d4"> </span><span style="color:#d4d4d4">=</span><span style="color:#d4d4d4"> </span><span style="color:#d4d4d4">os</span><span style="color:#d4d4d4">.</span><span style="color:#d4d4d4">path</span><span style="color:#d4d4d4">.</span><span style="color:#d4d4d4">realpath</span><span style="color:#d4d4d4">(</span><span style="color:#d4d4d4">which</span><span style="color:#d4d4d4">(</span><span style="color:#ce9178">&quot;rez&quot;</span><span style="color:#d4d4d4">,</span><span style="color:#d4d4d4"> </span><span style="color:#d4d4d4">env</span><span style="color:#d4d4d4">=</span><span style="color:#d4d4d4">{</span><span style="color:#ce9178">&quot;PATH&quot;</span><span style="color:#d4d4d4">:</span><span style="color:#d4d4d4"> </span><span style="color:#d4d4d4">dest_bin_dir</span><span style="color:#d4d4d4">,</span>
<span style="color:#d4d4d4">                                   </span><span style="color:#ce9178">&quot;PATHEXT&quot;</span><span style="color:#d4d4d4">:</span><span style="color:#d4d4d4"> </span><span style="color:#d4d4d4">os</span><span style="color:#d4d4d4">.</span><span style="color:#d4d4d4">environ</span><span style="color:#d4d4d4">.</span><span style="color:#d4d4d4">get</span><span style="color:#d4d4d4">(</span><span style="color:#ce9178">&quot;PATHEXT&quot;</span><span style="color:#d4d4d4">,</span><span style="color:#d4d4d4"> </span><span style="color:#ce9178">&quot;&quot;</span><span style="color:#d4d4d4">)</span><span style="color:#d4d4d4">}</span><span style="color:#d4d4d4">)</span><span style="color:#d4d4d4">)</span>
<span style="color:#d4d4d4">        </span><span style="color:#dcdcaa">print</span><span style="color:#d4d4d4">(</span><span style="color:#ce9178">&quot;Rez executable installed to: %s&quot;</span><span style="color:#d4d4d4"> </span><span style="color:#d4d4d4">%</span><span style="color:#d4d4d4"> </span><span style="color:#d4d4d4">rez_exe</span><span style="color:#d4d4d4">)</span>

<span style="color:#d4d4d4">        </span><span style="color:#c586c0">try</span><span style="color:#d4d4d4">:</span>
<span style="color:#d4d4d4">            </span><span style="color:#d4d4d4">out</span><span style="color:#d4d4d4"> </span><span style="color:#d4d4d4">=</span><span style="color:#d4d4d4"> </span><span style="color:#d4d4d4">subprocess</span><span style="color:#d4d4d4">.</span><span style="color:#d4d4d4">check_output</span><span style="color:#d4d4d4">(</span>
<span style="color:#d4d4d4">                </span><span style="color:#d4d4d4">[</span>
<span style="color:#d4d4d4">                    </span><span style="color:#d4d4d4">rez_exe</span><span style="color:#d4d4d4">,</span>
<span style="color:#d4d4d4">                    </span><span style="color:#ce9178">&quot;python&quot;</span><span style="color:#d4d4d4">,</span>
<span style="color:#d4d4d4">                    </span><span style="color:#ce9178">&quot;-c&quot;</span><span style="color:#d4d4d4">,</span>
<span style="color:#d4d4d4">                    </span><span style="color:#ce9178">&quot;import rez; print(rez.__path__[0])&quot;</span>
<span style="color:#d4d4d4">                </span><span style="color:#d4d4d4">]</span><span style="color:#d4d4d4">,</span>
<span style="color:#d4d4d4">                </span><span style="color:#d4d4d4">env</span><span style="color:#d4d4d4">=</span><span style="color:#d4d4d4">{</span><span style="color:#ce9178">&quot;PATH&quot;</span><span style="color:#d4d4d4">:</span><span style="color:#d4d4d4"> </span><span style="color:#d4d4d4">dest_bin_dir</span><span style="color:#d4d4d4">,</span>
<span style="color:#d4d4d4">                     </span><span style="color:#ce9178">&quot;SYSTEMROOT&quot;</span><span style="color:#d4d4d4">:</span><span style="color:#d4d4d4"> </span><span style="color:#d4d4d4">os</span><span style="color:#d4d4d4">.</span><span style="color:#d4d4d4">environ</span><span style="color:#d4d4d4">.</span><span style="color:#d4d4d4">get</span><span style="color:#d4d4d4">(</span><span style="color:#ce9178">&quot;SYSTEMROOT&quot;</span><span style="color:#d4d4d4">,</span><span style="color:#d4d4d4"> </span><span style="color:#ce9178">&quot;&quot;</span><span style="color:#d4d4d4">)</span><span style="color:#d4d4d4">}</span>
<span style="color:#d4d4d4">            </span><span style="color:#d4d4d4">)</span>
<span style="color:#d4d4d4">            </span><span style="color:#d4d4d4">pkg_path</span><span style="color:#d4d4d4"> </span><span style="color:#d4d4d4">=</span><span style="color:#d4d4d4"> </span><span style="color:#d4d4d4">os</span><span style="color:#d4d4d4">.</span><span style="color:#d4d4d4">path</span><span style="color:#d4d4d4">.</span><span style="color:#d4d4d4">realpath</span><span style="color:#d4d4d4">(</span><span style="color:#d4d4d4">out</span><span style="color:#d4d4d4">.</span><span style="color:#d4d4d4">decode</span><span style="color:#d4d4d4">(</span><span style="color:#d4d4d4">)</span><span style="color:#d4d4d4">.</span><span style="color:#d4d4d4">strip</span><span style="color:#d4d4d4">(</span><span style="color:#d4d4d4">)</span><span style="color:#d4d4d4">)</span>
<span style="color:#d4d4d4">            </span><span style="color:#dcdcaa">print</span><span style="color:#d4d4d4">(</span><span style="color:#ce9178">&quot;Rez python API visible via: %s&quot;</span><span style="color:#d4d4d4"> </span><span style="color:#d4d4d4">%</span><span style="color:#d4d4d4"> </span><span style="color:#d4d4d4">pkg_path</span><span style="color:#d4d4d4">)</span>
<span style="color:#d4d4d4">        </span><span style="color:#c586c0">except</span><span style="color:#d4d4d4"> </span><span style="color:#d4d4d4">subprocess</span><span style="color:#d4d4d4">.</span><span style="color:#d4d4d4">CalledProcessError</span><span style="color:#d4d4d4">:</span>
<span style="color:#d4d4d4">            </span><span style="color:#c586c0">pass</span>

<span style="color:#d4d4d4">        </span><span style="color:#dcdcaa">print</span><span style="color:#d4d4d4">(</span><span style="color:#d4d4d4">)</span>
<span style="color:#d4d4d4">        </span><span style="color:#dcdcaa">print</span><span style="color:#d4d4d4">(</span><span style="color:#ce9178">&quot;To activate Rez, add the following path to $PATH:&quot;</span><span style="color:#d4d4d4">)</span>
<span style="color:#d4d4d4">        </span><span style="color:#dcdcaa">print</span><span style="color:#d4d4d4">(</span><span style="color:#d4d4d4">dest_bin_dir</span><span style="color:#d4d4d4">)</span>

<span style="color:#d4d4d4">        </span><span style="color:#c586c0">if</span><span style="color:#d4d4d4"> </span><span style="color:#d4d4d4">completion_path</span><span style="color:#d4d4d4">:</span>
<span style="color:#d4d4d4">            </span><span style="color:#dcdcaa">print</span><span style="color:#d4d4d4">(</span><span style="color:#ce9178">&#x27;&#x27;</span><span style="color:#d4d4d4">)</span>
<span style="color:#d4d4d4">            </span><span style="color:#d4d4d4">shell</span><span style="color:#d4d4d4"> </span><span style="color:#d4d4d4">=</span><span style="color:#d4d4d4"> </span><span style="color:#d4d4d4">os</span><span style="color:#d4d4d4">.</span><span style="color:#d4d4d4">getenv</span><span style="color:#d4d4d4">(</span><span style="color:#ce9178">&#x27;SHELL&#x27;</span><span style="color:#d4d4d4">)</span>

<span style="color:#d4d4d4">            </span><span style="color:#c586c0">if</span><span style="color:#d4d4d4"> </span><span style="color:#d4d4d4">shell</span><span style="color:#d4d4d4">:</span>
<span style="color:#d4d4d4">                </span><span style="color:#d4d4d4">shell</span><span style="color:#d4d4d4"> </span><span style="color:#d4d4d4">=</span><span style="color:#d4d4d4"> </span><span style="color:#d4d4d4">os</span><span style="color:#d4d4d4">.</span><span style="color:#d4d4d4">path</span><span style="color:#d4d4d4">.</span><span style="color:#d4d4d4">basename</span><span style="color:#d4d4d4">(</span><span style="color:#d4d4d4">shell</span><span style="color:#d4d4d4">)</span>
<span style="color:#d4d4d4">                </span><span style="color:#c586c0">if</span><span style="color:#d4d4d4"> </span><span style="color:#ce9178">&quot;csh&quot;</span><span style="color:#d4d4d4"> </span><span style="color:#c586c0">in</span><span style="color:#d4d4d4"> </span><span style="color:#d4d4d4">shell</span><span style="color:#d4d4d4">:</span>
<span style="color:#d4d4d4">                    </span><span style="color:#d4d4d4">ext</span><span style="color:#d4d4d4"> </span><span style="color:#d4d4d4">=</span><span style="color:#d4d4d4"> </span><span style="color:#ce9178">&quot;csh&quot;</span>
<span style="color:#d4d4d4">                </span><span style="color:#c586c0">else</span><span style="color:#d4d4d4">:</span>
<span style="color:#d4d4d4">                    </span><span style="color:#d4d4d4">ext</span><span style="color:#d4d4d4"> </span><span style="color:#d4d4d4">=</span><span style="color:#d4d4d4"> </span><span style="color:#ce9178">&quot;sh&quot;</span>

<span style="color:#d4d4d4">                </span><span style="color:#dcdcaa">print</span><span style="color:#d4d4d4">(</span><span style="color:#ce9178">&quot;You may also want to source the completion script (for %s):&quot;</span><span style="color:#d4d4d4"> </span><span style="color:#d4d4d4">%</span><span style="color:#d4d4d4"> </span><span style="color:#d4d4d4">shell</span><span style="color:#d4d4d4">)</span>
<span style="color:#d4d4d4">                </span><span style="color:#dcdcaa">print</span><span style="color:#d4d4d4">(</span><span style="color:#ce9178">&quot;source {0}/complete.{1}&quot;</span><span style="color:#d4d4d4">.</span><span style="color:#d4d4d4">format</span><span style="color:#d4d4d4">(</span><span style="color:#d4d4d4">completion_path</span><span style="color:#d4d4d4">,</span><span style="color:#d4d4d4"> </span><span style="color:#d4d4d4">ext</span><span style="color:#d4d4d4">)</span><span style="color:#d4d4d4">)</span>
<span style="color:#d4d4d4">            </span><span style="color:#c586c0">else</span><span style="color:#d4d4d4">:</span>
<span style="color:#d4d4d4">                </span><span style="color:#dcdcaa">print</span><span style="color:#d4d4d4">(</span><span style="color:#ce9178">&quot;You may also want to source the relevant completion script from:&quot;</span><span style="color:#d4d4d4">)</span>
<span style="color:#d4d4d4">                </span><span style="color:#dcdcaa">print</span><span style="color:#d4d4d4">(</span><span style="color:#d4d4d4">completion_path</span><span style="color:#d4d4d4">)</span>

<span style="color:#d4d4d4">        </span><span style="color:#dcdcaa">print</span><span style="color:#d4d4d4">(</span><span style="color:#ce9178">&#x27;&#x27;</span><span style="color:#d4d4d4">)</span>


<span style="color:#569cd6">def</span><span style="color:#d4d4d4"> </span><span style="color:#dcdcaa">install_rez_from_source</span><span style="color:#d4d4d4">(</span><span style="color:#9cdcfe">dest_dir</span><span style="color:#d4d4d4">)</span><span style="color:#d4d4d4">:</span>
<span style="color:#d4d4d4">    </span><span style="color:#d4d4d4">_</span><span style="color:#d4d4d4">,</span><span style="color:#d4d4d4"> </span><span style="color:#d4d4d4">py_executable</span><span style="color:#d4d4d4"> </span><span style="color:#d4d4d4">=</span><span style="color:#d4d4d4"> </span><span style="color:#d4d4d4">get_virtualenv_py_executable</span><span style="color:#d4d4d4">(</span><span style="color:#d4d4d4">dest_dir</span><span style="color:#d4d4d4">)</span>

<span style="color:#d4d4d4">    </span><span style="color:#6a9955"># install via pip</span>
<span style="color:#d4d4d4">    </span><span style="color:#d4d4d4">run_command</span><span style="color:#d4d4d4">(</span><span style="color:#d4d4d4">[</span><span style="color:#d4d4d4">py_executable</span><span style="color:#d4d4d4">,</span><span style="color:#d4d4d4"> </span><span style="color:#ce9178">&quot;-m&quot;</span><span style="color:#d4d4d4">,</span><span style="color:#d4d4d4"> </span><span style="color:#ce9178">&quot;pip&quot;</span><span style="color:#d4d4d4">,</span><span style="color:#d4d4d4"> </span><span style="color:#ce9178">&quot;install&quot;</span><span style="color:#d4d4d4">,</span><span style="color:#d4d4d4"> </span><span style="color:#ce9178">&quot;-e&quot;</span><span style="color:#d4d4d4">,</span><span style="color:#d4d4d4"> </span><span style="color:#ce9178">&quot;.&quot;</span><span style="color:#d4d4d4">]</span><span style="color:#d4d4d4">)</span>


<span style="color:#569cd6">def</span><span style="color:#d4d4d4"> </span><span style="color:#dcdcaa">install_as_rez_package</span><span style="color:#d4d4d4">(</span><span style="color:#9cdcfe">repo_path</span><span style="color:#d4d4d4">)</span><span style="color:#d4d4d4">:</span>
<span style="color:#ce9178">    &quot;&quot;&quot;Installs rez as a rez package.</span>
<span style="color:#ce9178"></span>
<span style="color:#ce9178">    Note that this can be used to install new variants of rez into an existing</span>
<span style="color:#ce9178">    rez package (you may require multiple platform installations for example).</span>
<span style="color:#ce9178"></span>
<span style="color:#ce9178">    Args:</span>
<span style="color:#ce9178">        repo_path (str): Full path to the package repository to install into.</span>
<span style="color:#ce9178">    &quot;&quot;&quot;</span>
<span style="color:#d4d4d4">    </span><span style="color:#c586c0">from</span><span style="color:#d4d4d4"> </span><span style="color:#d4d4d4">tempfile</span><span style="color:#d4d4d4"> </span><span style="color:#c586c0">import</span><span style="color:#d4d4d4"> </span><span style="color:#d4d4d4">mkdtemp</span>

<span style="color:#d4d4d4">    </span><span style="color:#6a9955"># do a temp production (virtualenv-based) rez install</span>
<span style="color:#d4d4d4">    </span><span style="color:#d4d4d4">tmpdir</span><span style="color:#d4d4d4"> </span><span style="color:#d4d4d4">=</span><span style="color:#d4d4d4"> </span><span style="color:#d4d4d4">mkdtemp</span><span style="color:#d4d4d4">(</span><span style="color:#d4d4d4">prefix</span><span style="color:#d4d4d4">=</span><span style="color:#ce9178">&quot;rez-install-&quot;</span><span style="color:#d4d4d4">)</span>
<span style="color:#d4d4d4">    </span><span style="color:#d4d4d4">install</span><span style="color:#d4d4d4">(</span><span style="color:#d4d4d4">tmpdir</span><span style="color:#d4d4d4">)</span>
<span style="color:#d4d4d4">    </span><span style="color:#d4d4d4">_</span><span style="color:#d4d4d4">,</span><span style="color:#d4d4d4"> </span><span style="color:#d4d4d4">py_executable</span><span style="color:#d4d4d4"> </span><span style="color:#d4d4d4">=</span><span style="color:#d4d4d4"> </span><span style="color:#d4d4d4">get_virtualenv_py_executable</span><span style="color:#d4d4d4">(</span><span style="color:#d4d4d4">tmpdir</span><span style="color:#d4d4d4">)</span>

<span style="color:#d4d4d4">    </span><span style="color:#c586c0">try</span><span style="color:#d4d4d4">:</span>
<span style="color:#d4d4d4">        </span><span style="color:#6a9955"># This extracts a rez package from the installation. See</span>
<span style="color:#d4d4d4">        </span><span style="color:#6a9955"># rez.utils.installer.install_as_rez_package for more details.</span>
<span style="color:#d4d4d4">        </span><span style="color:#6a9955">#</span>
<span style="color:#d4d4d4">        </span><span style="color:#d4d4d4">args</span><span style="color:#d4d4d4"> </span><span style="color:#d4d4d4">=</span><span style="color:#d4d4d4"> </span><span style="color:#d4d4d4">(</span>
<span style="color:#d4d4d4">            </span><span style="color:#d4d4d4">py_executable</span><span style="color:#d4d4d4">,</span><span style="color:#d4d4d4"> </span><span style="color:#ce9178">&quot;-E&quot;</span><span style="color:#d4d4d4">,</span><span style="color:#d4d4d4"> </span><span style="color:#ce9178">&quot;-c&quot;</span><span style="color:#d4d4d4">,</span>
<span style="color:#d4d4d4">            </span><span style="color:#d4d4d4">r</span><span style="color:#ce9178">&quot;from rez.utils.installer import install_as_rez_package;&quot;</span>
<span style="color:#d4d4d4">            </span><span style="color:#d4d4d4">r</span><span style="color:#ce9178">&quot;install_as_rez_package(%r)&quot;</span><span style="color:#d4d4d4"> </span><span style="color:#d4d4d4">%</span><span style="color:#d4d4d4"> </span><span style="color:#d4d4d4">repo_path</span>
<span style="color:#d4d4d4">        </span><span style="color:#d4d4d4">)</span>
<span style="color:#d4d4d4">        </span><span style="color:#dcdcaa">print</span><span style="color:#d4d4d4">(</span><span style="color:#d4d4d4">subprocess</span><span style="color:#d4d4d4">.</span><span style="color:#d4d4d4">check_output</span><span style="color:#d4d4d4">(</span><span style="color:#d4d4d4">args</span><span style="color:#d4d4d4">)</span><span style="color:#d4d4d4">)</span>

<span style="color:#d4d4d4">    </span><span style="color:#c586c0">finally</span><span style="color:#d4d4d4">:</span>
<span style="color:#d4d4d4">        </span><span style="color:#6a9955"># cleanup temp install</span>
<span style="color:#d4d4d4">        </span><span style="color:#d4d4d4">shutil</span><span style="color:#d4d4d4">.</span><span style="color:#d4d4d4">rmtree</span><span style="color:#d4d4d4">(</span><span style="color:#d4d4d4">tmpdir</span><span style="color:#d4d4d4">)</span>

<span style="color:#d4d4d4">        </span><span style="color:#dcdcaa">print</span><span style="color:#d4d4d4">(</span><span style="color:#ce9178">&quot;installing rez with pip%s...&quot;</span><span style="color:#d4d4d4"> </span><span style="color:#d4d4d4">%</span><span style="color:#d4d4d4"> </span><span style="color:#d4d4d4">(</span><span style="color:#ce9178">&quot; (editable mode)&quot;</span><span style="color:#d4d4d4"> </span><span style="color:#c586c0">if</span><span style="color:#d4d4d4"> </span><span style="color:#d4d4d4">editable</span><span style="color:#d4d4d4"> </span><span style="color:#c586c0">else</span><span style="color:#d4d4d4"> </span><span style="color:#ce9178">&quot;&quot;</span><span style="color:#d4d4d4">)</span><span style="color:#d4d4d4">)</span>


<span style="color:#569cd6">def</span><span style="color:#d4d4d4"> </span><span style="color:#dcdcaa">install_as_rez_package_tail</span><span style="color:#d4d4d4">(</span><span style="color:#d4d4d4">)</span><span style="color:#d4d4d4">:</span>
<span style="color:#d4d4d4">    </span><span style="color:#c586c0">pass</span>


<span style="color:#c586c0">if</span><span style="color:#d4d4d4"> </span><span style="color:#d4d4d4">__name__</span><span style="color:#d4d4d4"> </span><span style="color:#d4d4d4">=</span><span style="color:#d4d4d4">=</span><span style="color:#d4d4d4"> </span><span style="color:#ce9178">&quot;__main__&quot;</span><span style="color:#d4d4d4">:</span>
<span style="color:#d4d4d4">    </span><span style="color:#d4d4d4">parser</span><span style="color:#d4d4d4"> </span><span style="color:#d4d4d4">=</span><span style="color:#d4d4d4"> </span><span style="color:#d4d4d4">argparse</span><span style="color:#d4d4d4">.</span><span style="color:#d4d4d4">ArgumentParser</span><span style="color:#d4d4d4">(</span>
<span style="color:#d4d4d4">        </span><span style="color:#ce9178">&quot;Rez installer&quot;</span><span style="color:#d4d4d4">,</span><span style="color:#d4d4d4"> </span><span style="color:#d4d4d4">description</span><span style="color:#d4d4d4">=</span><span style="color:#ce9178">&quot;Install rez in a production ready, &quot;</span>
<span style="color:#d4d4d4">                                     </span><span style="color:#ce9178">&quot;standalone Python virtual environment.&quot;</span><span style="color:#d4d4d4">)</span>
<span style="color:#d4d4d4">    </span><span style="color:#d4d4d4">parser</span><span style="color:#d4d4d4">.</span><span style="color:#d4d4d4">add_argument</span><span style="color:#d4d4d4">(</span>
<span style="color:#d4d4d4">        </span><span style="color:#ce9178">&#x27;-v&#x27;</span><span style="color:#d4d4d4">,</span><span style="color:#d4d4d4"> </span><span style="color:#ce9178">&#x27;--verbose&#x27;</span><span style="color:#d4d4d4">,</span><span style="color:#d4d4d4"> </span><span style="color:#d4d4d4">action</span><span style="color:#d4d4d4">=</span><span style="color:#ce9178">&#x27;count&#x27;</span><span style="color:#d4d4d4">,</span><span style="color:#d4d4d4"> </span><span style="color:#d4d4d4">dest</span><span style="color:#d4d4d4">=</span><span style="color:#ce9178">&#x27;verbose&#x27;</span><span style="color:#d4d4d4">,</span><span style="color:#d4d4d4"> </span><span style="color:#d4d4d4">default</span><span style="color:#d4d4d4">=</span><span style="color:#d4d4d4">0</span><span style="color:#d4d4d4">,</span>
<span style="color:#d4d4d4">        </span><span style="color:#d4d4d4">help</span><span style="color:#d4d4d4">=</span><span style="color:#ce9178">&quot;Increase verbosity.&quot;</span><span style="color:#d4d4d4">)</span>
<span style="color:#d4d4d4">    </span><span style="color:#d4d4d4">parser</span><span style="color:#d4d4d4">.</span><span style="color:#d4d4d4">add_argument</span><span style="color:#d4d4d4">(</span>
<span style="color:#d4d4d4">        </span><span style="color:#ce9178">&#x27;-p&#x27;</span><span style="color:#d4d4d4">,</span><span style="color:#d4d4d4"> </span><span style="color:#ce9178">&#x27;--as-rez-package&#x27;</span><span style="color:#d4d4d4">,</span><span style="color:#d4d4d4"> </span><span style="color:#d4d4d4">action</span><span style="color:#d4d4d4">=</span><span style="color:#ce9178">&quot;store_true&quot;</span><span style="color:#d4d4d4">,</span>
<span style="color:#d4d4d4">        </span><span style="color:#d4d4d4">help</span><span style="color:#d4d4d4">=</span><span style="color:#ce9178">&quot;Install rez as a rez package. Note that this installs the API &quot;</span>
<span style="color:#d4d4d4">             </span><span style="color:#ce9178">&quot;only (no cli tools), and DIR is expected to be the path to a &quot;</span>
<span style="color:#d4d4d4">             </span><span style="color:#ce9178">&quot;rez package repository (and will default to ~/packages instead).&quot;</span><span style="color:#d4d4d4">)</span>
<span style="color:#d4d4d4">    </span><span style="color:#d4d4d4">parser</span><span style="color:#d4d4d4">.</span><span style="color:#d4d4d4">add_argument</span><span style="color:#d4d4d4">(</span>
<span style="color:#d4d4d4">        </span><span style="color:#ce9178">&#x27;-e&#x27;</span><span style="color:#d4d4d4">,</span><span style="color:#d4d4d4"> </span><span style="color:#ce9178">&#x27;--editable&#x27;</span><span style="color:#d4d4d4">,</span><span style="color:#d4d4d4"> </span><span style="color:#d4d4d4">action</span><span style="color:#d4d4d4">=</span><span style="color:#ce9178">&quot;store_true&quot;</span><span style="color:#d4d4d4">,</span>
<span style="color:#d4d4d4">        </span><span style="color:#d4d4d4">help</span><span style="color:#d4d4d4">=</span><span style="color:#ce9178">&quot;Make the install an editable install (pip install -e). This should &quot;</span>
<span style="color:#d4d4d4">             </span><span style="color:#ce9178">&quot;only be used for development purposes&quot;</span><span style="color:#d4d4d4">)</span>
<span style="color:#d4d4d4">    </span><span style="color:#d4d4d4">parser</span><span style="color:#d4d4d4">.</span><span style="color:#d4d4d4">add_argument</span><span style="color:#d4d4d4">(</span>
<span style="color:#d4d4d4">        </span><span style="color:#ce9178">&quot;DIR&quot;</span><span style="color:#d4d4d4">,</span><span style="color:#d4d4d4"> </span><span style="color:#d4d4d4">nargs</span><span style="color:#d4d4d4">=</span><span style="color:#ce9178">&#x27;?&#x27;</span><span style="color:#d4d4d4">,</span>
<span style="color:#d4d4d4">        </span><span style="color:#d4d4d4">help</span><span style="color:#d4d4d4">=</span><span style="color:#ce9178">&quot;Destination directory. If &#x27;{version}&#x27; is present, it will be expanded &quot;</span>
<span style="color:#d4d4d4">             </span><span style="color:#ce9178">&quot;to the rez version. Default: /opt/rez&quot;</span><span style="color:#d4d4d4">)</span>

<span style="color:#d4d4d4">    </span><span style="color:#d4d4d4">opts</span><span style="color:#d4d4d4"> </span><span style="color:#d4d4d4">=</span><span style="color:#d4d4d4"> </span><span style="color:#d4d4d4">parser</span><span style="color:#d4d4d4">.</span><span style="color:#d4d4d4">parse_args</span><span style="color:#d4d4d4">(</span><span style="color:#d4d4d4">)</span>

<span style="color:#d4d4d4">    </span><span style="color:#6a9955"># determine install path</span>
<span style="color:#d4d4d4">    </span><span style="color:#c586c0">if</span><span style="color:#d4d4d4"> </span><span style="color:#d4d4d4">opts</span><span style="color:#d4d4d4">.</span><span style="color:#d4d4d4">DIR</span><span style="color:#d4d4d4">:</span>
<span style="color:#d4d4d4">        </span><span style="color:#d4d4d4">path</span><span style="color:#d4d4d4"> </span><span style="color:#d4d4d4">=</span><span style="color:#d4d4d4"> </span><span style="color:#d4d4d4">opts</span><span style="color:#d4d4d4">.</span><span style="color:#d4d4d4">DIR</span>
<span style="color:#d4d4d4">    </span><span style="color:#c586c0">elif</span><span style="color:#d4d4d4"> </span><span style="color:#d4d4d4">opts</span><span style="color:#d4d4d4">.</span><span style="color:#d4d4d4">as_rez_package</span><span style="color:#d4d4d4">:</span>
<span style="color:#d4d4d4">        </span><span style="color:#d4d4d4">path</span><span style="color:#d4d4d4"> </span><span style="color:#d4d4d4">=</span><span style="color:#d4d4d4"> </span><span style="color:#ce9178">&quot;~/packages&quot;</span>
<span style="color:#d4d4d4">    </span><span style="color:#c586c0">else</span><span style="color:#d4d4d4">:</span>
<span style="color:#d4d4d4">        </span><span style="color:#d4d4d4">path</span><span style="color:#d4d4d4"> </span><span style="color:#d4d4d4">=</span><span style="color:#d4d4d4"> </span><span style="color:#ce9178">&quot;/opt/rez&quot;</span>

<span style="color:#d4d4d4">    </span><span style="color:#c586c0">if</span><span style="color:#d4d4d4"> </span><span style="color:#d4d4d4">opts</span><span style="color:#d4d4d4">.</span><span style="color:#d4d4d4">as_rez_package</span><span style="color:#d4d4d4"> </span><span style="color:#c586c0">and</span><span style="color:#d4d4d4"> </span><span style="color:#d4d4d4">opts</span><span style="color:#d4d4d4">.</span><span style="color:#d4d4d4">editable</span><span style="color:#d4d4d4">:</span>
<span style="color:#d4d4d4">        </span><span style="color:#d4d4d4">parser</span><span style="color:#d4d4d4">.</span><span style="color:#d4d4d4">error</span><span style="color:#d4d4d4">(</span>
<span style="color:#d4d4d4">            </span><span style="color:#ce9178">&quot;Cannot install rez as a package and in editable mode&quot;</span><span style="color:#d4d4d4">)</span>

<span style="color:#d4d4d4">    </span><span style="color:#d4d4d4">dest_dir</span><span style="color:#d4d4d4"> </span><span style="color:#d4d4d4">=</span><span style="color:#d4d4d4"> </span><span style="color:#d4d4d4">path</span><span style="color:#d4d4d4">.</span><span style="color:#d4d4d4">replace</span><span style="color:#d4d4d4">(</span><span style="color:#ce9178">&quot;{version}&quot;</span><span style="color:#d4d4d4">,</span><span style="color:#d4d4d4"> </span><span style="color:#d4d4d4">_rez_version</span><span style="color:#d4d4d4">)</span>
<span style="color:#d4d4d4">    </span><span style="color:#d4d4d4">dest_dir</span><span style="color:#d4d4d4"> </span><span style="color:#d4d4d4">=</span><span style="color:#d4d4d4"> </span><span style="color:#d4d4d4">os</span><span style="color:#d4d4d4">.</span><span style="color:#d4d4d4">path</span><span style="color:#d4d4d4">.</span><span style="color:#d4d4d4">expanduser</span><span style="color:#d4d4d4">(</span><span style="color:#d4d4d4">dest_dir</span><span style="color:#d4d4d4">)</span>

<span style="color:#d4d4d4">    </span><span style="color:#c586c0">if</span><span style="color:#d4d4d4"> </span><span style="color:#c586c0">not</span><span style="color:#d4d4d4"> </span><span style="color:#d4d4d4">opts</span><span style="color:#d4d4d4">.</span><span style="color:#d4d4d4">keep_symlinks</span><span style="color:#d4d4d4">:</span>
<span style="color:#d4d4d4">        </span><span style="color:#d4d4d4">dest_dir</span><span style="color:#d4d4d4"> </span><span style="color:#d4d4d4">=</span><span style="color:#d4d4d4"> </span><span style="color:#d4d4d4">os</span><span style="color:#d4d4d4">.</span><span style="color:#d4d4d4">path</span><span style="color:#d4d4d4">.</span><span style="color:#d4d4d4">realpath</span><span style="color:#d4d4d4">(</span><span style="color:#d4d4d4">dest_dir</span><span style="color:#d4d4d4">)</span>

<span style="color:#d4d4d4">    </span><span style="color:#6a9955"># perform the installation</span>
<span style="color:#d4d4d4">    </span><span style="color:#c586c0">if</span><span style="color:#d4d4d4"> </span><span style="color:#d4d4d4">opts</span><span style="color:#d4d4d4">.</span><span style="color:#d4d4d4">as_rez_package</span><span style="color:#d4d4d4">:</span>
<span style="color:#d4d4d4">        </span><span style="color:#d4d4d4">install_as_rez_package</span><span style="color:#d4d4d4">(</span><span style="color:#d4d4d4">dest_dir</span><span style="color:#d4d4d4">)</span>
<span style="color:#d4d4d4">    </span><span style="color:#c586c0">else</span><span style="color:#d4d4d4">:</span>
<span style="color:#d4d4d4">        </span><span style="color:#d4d4d4">install</span><span style="color:#d4d4d4">(</span><span style="color:#d4d4d4">dest_dir</span><span style="color:#d4d4d4">,</span><span style="color:#d4d4d4"> </span><span style="color:#d4d4d4">print_welcome</span><span style="color:#d4d4d4">=</span><span style="color:#569cd6">True</span><span style="color:#d4d4d4">,</span><span style="color:#d4d4d4"> </span><span style="color:#d4d4d4">editable</span><span style="color:#d4d4d4">=</span><span style="color:#d4d4d4">opts</span><span style="color:#d4d4d4">.</span><span style="color:#d4d4d4">editable</span><span style="color:#d4d4d4">)</span>
</div></div>
<div class="a" style="left:0;top:0">
<div class="t" style="left:9.00px;top:60.54px;font-size:11.88px;line-height:11.88px;color:#ffffff;transform:scaleX(0.9409);transform-origin:0 0;text-shadow:0 0 2px #000,0 1px 2px #000,1px 1px 1px rgba(0,0,0,.8);">Recycle Bin</div>
<div class="t" style="left:13.00px;top:162.54px;font-size:11.88px;line-height:11.88px;color:#ffffff;transform:scaleX(1.0380);transform-origin:0 0;text-shadow:0 0 2px #000,0 1px 2px #000,1px 1px 1px rgba(0,0,0,.8);">Microsoft</div>
<div class="t" style="left:24.00px;top:177.54px;font-size:11.88px;line-height:11.88px;color:#ffffff;transform:scaleX(0.9375);transform-origin:0 0;text-shadow:0 0 2px #000,0 1px 2px #000,1px 1px 1px rgba(0,0,0,.8);">Edge</div>
<div class="t" style="left:9.00px;top:264.54px;font-size:11.88px;line-height:11.88px;color:#ffffff;transform:scaleX(1.0531);transform-origin:0 0;text-shadow:0 0 2px #000,0 1px 2px #000,1px 1px 1px rgba(0,0,0,.8);">Boxstarter</div>
<div class="t" style="left:24.00px;top:279.54px;font-size:11.88px;line-height:11.88px;color:#ffffff;transform:scaleX(1.0225);transform-origin:0 0;text-shadow:0 0 2px #000,0 1px 2px #000,1px 1px 1px rgba(0,0,0,.8);">Shell</div>
<div class="t" style="left:8.00px;top:366.54px;font-size:11.88px;line-height:11.88px;color:#ffffff;transform:scaleX(1.0391);transform-origin:0 0;text-shadow:0 0 2px #000,0 1px 2px #000,1px 1px 1px rgba(0,0,0,.8);">desktop.ini</div>
<div class="t" style="left:8.00px;top:468.54px;font-size:11.88px;line-height:11.88px;color:#ffffff;transform:scaleX(1.0391);transform-origin:0 0;text-shadow:0 0 2px #000,0 1px 2px #000,1px 1px 1px rgba(0,0,0,.8);">desktop.ini</div>
<div class="t" style="left:18.00px;top:570.54px;font-size:11.88px;line-height:11.88px;color:#ffffff;transform:scaleX(0.9922);transform-origin:0 0;text-shadow:0 0 2px #000,0 1px 2px #000,1px 1px 1px rgba(0,0,0,.8);">Google</div>
<div class="t" style="left:17.00px;top:585.54px;font-size:11.88px;line-height:11.88px;color:#ffffff;transform:scaleX(0.9704);transform-origin:0 0;text-shadow:0 0 2px #000,0 1px 2px #000,1px 1px 1px rgba(0,0,0,.8);">Chrome</div>
<div class="t" style="left:296.00px;top:30.12px;font-size:12.38px;line-height:12.38px;color:#3c4043;transform:scaleX(0.9500);transform-origin:0 0;-webkit-mask-image:linear-gradient(90deg,#000 80%,transparent);overflow:hidden;">Keeper® Password Manager &amp; D</div>
<div class="t" style="left:535.00px;top:30.12px;font-size:12.38px;line-height:12.38px;color:#3c4043;transform:scaleX(0.8870);transform-origin:0 0;">SSH and GPG keys</div>
<div class="t" style="left:774.00px;top:30.12px;font-size:12.38px;line-height:12.38px;color:#202124;transform:scaleX(0.9663);transform-origin:0 0;-webkit-mask-image:linear-gradient(90deg,#000 80%,transparent);overflow:hidden;">install.py - Workspace - Visual Stu</div>
<div class="t" style="left:394.00px;top:64.44px;font-size:14.36px;line-height:14.36px;color:#202124;transform:scaleX(0.9361);transform-origin:0 0;">vscode.dev</div>
<div class="t" style="left:284.00px;top:98.12px;font-size:12.38px;line-height:12.38px;color:#fff;transform:scaleX(0.9543);transform-origin:0 0;">Visual Studio Code (Preview). Anywhere, anytime, entirely in your browser.</div>
<div class="t" style="left:690.00px;top:98.12px;font-size:12.38px;line-height:12.38px;color:#fff;transform:scaleX(0.9616);transform-origin:0 0;text-decoration:underline;text-underline-offset:1px;">Read the Announcement</div>
<div class="t" style="left:839.00px;top:98.12px;font-size:12.38px;line-height:12.38px;color:#fff;transform:scaleX(0.9460);transform-origin:0 0;text-decoration:underline;text-underline-offset:1px;">Privacy &amp; Cookies</div>
<div class="t" style="left:952.00px;top:98.12px;font-size:12.38px;line-height:12.38px;color:#fff;transform:scaleX(0.9329);transform-origin:0 0;text-decoration:underline;text-underline-offset:1px;">Terms of Use</div>
<div class="t" style="left:1038.00px;top:98.12px;font-size:12.38px;line-height:12.38px;color:#fff;transform:scaleX(0.9443);transform-origin:0 0;text-decoration:underline;text-underline-offset:1px;">Download VS Code</div>
<div class="t" style="left:320.00px;top:129.38px;font-size:10.89px;line-height:10.89px;color:#bbbbbb;transform:scaleX(0.8441);transform-origin:0 0;">EXPLORER</div>
<div class="t" style="left:320.00px;top:157.38px;font-size:10.89px;line-height:10.89px;color:#cccccc;font-weight:700;transform:scaleX(0.9284);transform-origin:0 0;">WORKSPACE</div>
<div class="t" style="left:334.00px;top:178.71px;font-size:12.87px;line-height:12.87px;color:#cccccc;transform:scaleX(0.9937);transform-origin:0 0;">venv</div>
<div class="t" style="left:342.00px;top:200.71px;font-size:12.87px;line-height:12.87px;color:#cccccc;transform:scaleX(0.9900);transform-origin:0 0;">Lib</div>
<div class="t" style="left:342.00px;top:222.71px;font-size:12.87px;line-height:12.87px;color:#ffffff;transform:scaleX(0.9666);transform-origin:0 0;">Scripts</div>
<div class="t" style="left:342.00px;top:244.71px;font-size:12.87px;line-height:12.87px;color:#cccccc;transform:scaleX(0.9326);transform-origin:0 0;">src</div>
<div class="t" style="left:360.00px;top:244.60px;font-size:13px;line-height:13px;color:#8a8a8a;">\</div>
<div class="t" style="left:367.50px;top:244.71px;font-size:12.87px;line-height:12.87px;color:#cccccc;transform:scaleX(0.9231);transform-origin:0 0;">rez</div>
<div class="t" style="left:342.00px;top:266.71px;font-size:12.87px;line-height:12.87px;color:#cccccc;transform:scaleX(1.0396);transform-origin:0 0;">.gitignore</div>
<div class="t" style="left:342.00px;top:287.71px;font-size:12.87px;line-height:12.87px;color:#cccccc;transform:scaleX(1.0077);transform-origin:0 0;">pyvenv.cfg</div>
<div class="t" style="left:320.00px;top:973.38px;font-size:10.89px;line-height:10.89px;color:#cccccc;font-weight:700;transform:scaleX(0.9637);transform-origin:0 0;">OUTLINE</div>
<div class="t" style="left:320.00px;top:995.38px;font-size:10.89px;line-height:10.89px;color:#cccccc;font-weight:700;transform:scaleX(0.9655);transform-origin:0 0;">TIMELINE</div>
<div class="t" style="left:632.00px;top:128.71px;font-size:12.87px;line-height:12.87px;color:#969696;transform:scaleX(1.0077);transform-origin:0 0;">setup.py</div>
<div class="t" style="left:752.00px;top:128.71px;font-size:12.87px;line-height:12.87px;color:#ffffff;">install.py</div>
<div class="t" style="left:616.00px;top:155.71px;font-size:12.87px;line-height:12.87px;color:#a9a9a9;transform:scaleX(0.9937);transform-origin:0 0;">venv</div>
<div class="t" style="left:659.00px;top:155.71px;font-size:12.87px;line-height:12.87px;color:#a9a9a9;transform:scaleX(0.9326);transform-origin:0 0;">src</div>
<div class="t" style="left:691.00px;top:155.71px;font-size:12.87px;line-height:12.87px;color:#a9a9a9;transform:scaleX(0.9510);transform-origin:0 0;">rez</div>
<div class="t" style="left:746.00px;top:155.71px;font-size:12.87px;line-height:12.87px;color:#a9a9a9;">install.py</div>
<div class="t" style="left:311.50px;top:1016.10px;font-size:13px;line-height:13px;color:#fff;">0</div>
<div class="t" style="left:338.50px;top:1016.10px;font-size:13px;line-height:13px;color:#fff;">0</div>
<div class="t" style="left:1286.00px;top:1016.54px;font-size:11.88px;line-height:11.88px;color:#fff;transform:scaleX(0.9579);transform-origin:0 0;">Ln 216, Col 22</div>
<div class="t" style="left:1376.00px;top:1016.54px;font-size:11.88px;line-height:11.88px;color:#fff;transform:scaleX(0.9278);transform-origin:0 0;">Spaces: 4</div>
<div class="t" style="left:1441.00px;top:1016.54px;font-size:11.88px;line-height:11.88px;color:#fff;transform:scaleX(0.9211);transform-origin:0 0;">UTF-8</div>
<div class="t" style="left:1489.00px;top:1016.54px;font-size:11.88px;line-height:11.88px;color:#fff;transform:scaleX(0.7937);transform-origin:0 0;">LF</div>
<div class="t" style="left:1536.00px;top:1016.54px;font-size:11.88px;line-height:11.88px;color:#fff;">Python</div>
<div class="t" style="left:1590.00px;top:1016.54px;font-size:11.88px;line-height:11.88px;color:#fff;transform:scaleX(0.9362);transform-origin:0 0;">Layout: US</div>
<div class="t" style="left:1599.00px;top:957.76px;font-size:19.3px;line-height:19.3px;color:rgba(255,255,255,.42);transform:scaleX(1.0284);transform-origin:0 0;">Activate Windows</div>
<div class="t" style="left:1599.00px;top:983.87px;font-size:13.86px;line-height:13.86px;color:rgba(255,255,255,.42);transform:scaleX(1.0764);transform-origin:0 0;">Go to Settings to activate Windows.</div>
<div class="t" style="left:1631.00px;top:1059.58px;font-size:13.37px;line-height:13.37px;color:#fff;transform:scaleX(0.9515);transform-origin:0 0;z-index:5;">60°F</div>
<div class="t" style="left:1667.00px;top:1059.58px;font-size:13.37px;line-height:13.37px;color:#fff;transform:scaleX(0.9765);transform-origin:0 0;z-index:5;">Sunny</div>
<div class="t" style="left:1812.50px;top:1059.14px;font-size:11.88px;line-height:11.88px;color:#fff;transform:scaleX(0.9342);transform-origin:0 0;z-index:5;">16:28 PM</div>
</div>
<!-- taskbar -->
<div class="a" style="left:0;top:1050px;width:1920px;height:30px;background:linear-gradient(90deg,#203840 0%,#22373f 40%,#21323f 62%,#1f2d45 80%,#1d2a4a 100%)"></div>
<div class="a" style="left:369px;top:1050px;width:36px;height:30px;background:rgba(255,255,255,.2)"></div>
<div class="a" style="left:188px;top:1078px;width:28px;height:2px;background:#76b9ed"></div>
<div class="a" style="left:299px;top:1078px;width:28px;height:2px;background:#76b9ed"></div>
<div class="a" style="left:369px;top:1078px;width:36px;height:2px;background:#76b9ed"></div>
<div class="a" style="left:447px;top:1078px;width:28px;height:2px;background:#76b9ed"></div>
<svg style="left:0;top:1050px" width="1920" height="30" viewBox="0 0 1920 30">
  <!-- windows logo -->
  <g fill="#fff"><path d="M10 8.2l6-.8v6.4h-6z M17 7.3l9-1.2v7.7h-9z M10 14.8h6v6.4l-6-.8z M17 14.8h9v7.7l-9-1.2z"/></g>
  <!-- search -->
  <g stroke="#fff" stroke-width="1.3" fill="none"><circle cx="56.5" cy="12" r="5"/><path d="M53 15.5l-7 7"/></g>
  <!-- cortana -->
  <circle cx="90" cy="15" r="6.8" stroke="#fff" stroke-width="1.7" fill="none"/>
  <!-- task view -->
  <g stroke="#fff" stroke-width="1.2" fill="none"><path d="M118 8h12 M118 22h12 M118.5 11.5h11v7h-11z M118 8v2 M130 8v2 M118 20v2 M130 20v2 M133.5 8v14"/><rect x="132.5" y="10.5" width="2" height="3" fill="#fff"/></g>
  <!-- edge -->
  <circle cx="165" cy="15" r="8" fill="#1a86d8"/>
  <path d="M157.5 12.5 Q160 6.5 166 6.5 Q173 7 173 13.5 Q173 17 169 17 Q167 17 166.5 15.5 Q169 14 167.5 12 Q165 10 161.5 12 Q159 13.5 157.5 16z" fill="#45cf72"/>
  <path d="M162 17 Q162 22 167 23 Q162 24 159.5 21 Q158 18.5 160 16z" fill="#0f4c91"/>
  <!-- explorer -->
  <path d="M193 9h8l1.5 2h9.5v11h-19z" fill="#e8b531"/>
  <path d="M193 12h19v10h-19z" fill="#ffd45c"/>
  <path d="M198 16h9v6h-2v-4h-5v4h-2z" fill="#2b79d6"/>
  <!-- store -->
  <rect x="229.5" y="9.5" width="17" height="14" rx="2" fill="#f3f3f3"/>
  <path d="M234 9.5 q0-4 4-4 q4 0 4 4" stroke="#1591e0" stroke-width="1.4" fill="none"/>
  <rect x="234" y="13" width="3.5" height="3.5" fill="#f25022"/><rect x="238.5" y="13" width="3.5" height="3.5" fill="#7fba00"/>
  <rect x="234" y="17.5" width="3.5" height="3.5" fill="#00a4ef"/><rect x="238.5" y="17.5" width="3.5" height="3.5" fill="#ffb900"/>
  <!-- mail -->
  <path d="M268 12l8-6 8 6v11h-16z" fill="#0f78d4"/>
  <path d="M268 12l8 6 8-6v11h-16z" fill="#28a8ea"/>
  <!-- powershell -->
  <path d="M306 8h15l-3.5 15h-15z" fill="#3f6fd8"/>
  <path d="M307.5 11.5l4 3.5-5 3.5 M311 19h4" stroke="#fff" stroke-width="1.4" fill="none"/>
  <!-- terminal (azure ps) -->
  <path d="M344 7h14l-2.5 12h-14z" fill="#32a5c9"/>
  <path d="M342 20h13l-.8 4h-13z" fill="#9aa9b0"/>
  <path d="M346 10l3 2.5-3.5 2.5 M349.5 15h3" stroke="#fff" stroke-width="1.2" fill="none"/>
  <!-- chrome -->
  <circle cx="387" cy="15" r="7.5" fill="#1da462"/>
  <path d="M387 7.5a7.5 7.5 0 0 1 6.5 3.75h-6.5a3.75 3.75 0 0 0-3.25 1.9l-3.25-5.6A7.5 7.5 0 0 1 387 7.5z" fill="#dd5144"/>
  <path d="M393.5 11.25a7.5 7.5 0 0 1-6.5 11.25l3.25-5.6a3.75 3.75 0 0 0-3.25-5.65z" fill="#ffcd46"/>
  <circle cx="387" cy="15" r="3.6" fill="#fff"/><circle cx="387" cy="15" r="2.7" fill="#4c8bf5"/>
  <!-- git gui -->
  <path d="M424 7l7.5 7.5-7.5 7.5-7.5-7.5z" fill="#f4d04c"/>
  <path d="M416.5 14.5l7.5-7.5v7.5z" fill="#6b9be0"/>
  <path d="M424 7l7.5 7.5h-7.5z" fill="#e05a5a"/>
  <path d="M424 14.5h7.5l-7.5 7.5z" fill="#8cc257"/>
  <circle cx="424" cy="15" r="2" fill="#333"/>
  <!-- cmd -->
  <rect x="451.5" y="8.5" width="16" height="13" fill="#000" stroke="#aaa"/>
  <rect x="452" y="9" width="15" height="1.6" fill="#ccd"/>
  <path d="M456 14h-2v4h2 M458 15v.5 M458 17v.5 M460 13l1.5 5 M462.5 18h3" stroke="#fff" stroke-width="1" fill="none"/>
  <!-- tray -->
  <defs><radialGradient id="sun" cx=".4" cy=".35" r=".7"><stop offset="0" stop-color="#ffe36b"/><stop offset="1" stop-color="#f6a31a"/></radialGradient></defs>
  <circle cx="1610" cy="15.5" r="9" fill="url(#sun)"/>
  <path d="M1717 18l5-5 5 5" stroke="#fff" stroke-width="1.2" fill="none"/>
  <g stroke="#fff" stroke-width="1.1" fill="none">
    <rect x="1741.5" y="10.5" width="7" height="9" rx="2"/><path d="M1749 13l3-1.5v7l-3-1.5 M1743 8.5h4 M1743 21.5h4"/>
    <path d="M1763.5 9.5h13v9h-13z M1770 18.5v3 M1766 21.5h8 M1761.5 8.5h4v3h-4z"/>
    <path d="M1786 12.5h2.5l3.5-3v11l-3.5-3h-2.5z M1794 12.5l4 4 M1798 12.5l-4 4"/>
  </g>
  <path d="M1880.5 8.5h14v10h-5l-2 3-2-3h-5z" fill="#fff"/>
  <path d="M1883 11h9 M1883 13.5h9 M1883 16h6" stroke="#1d2a4a" stroke-width="1"/>
  <rect x="1914" y="0" width="1" height="30" fill="#6a7280"/>
</svg>

</body></html>
